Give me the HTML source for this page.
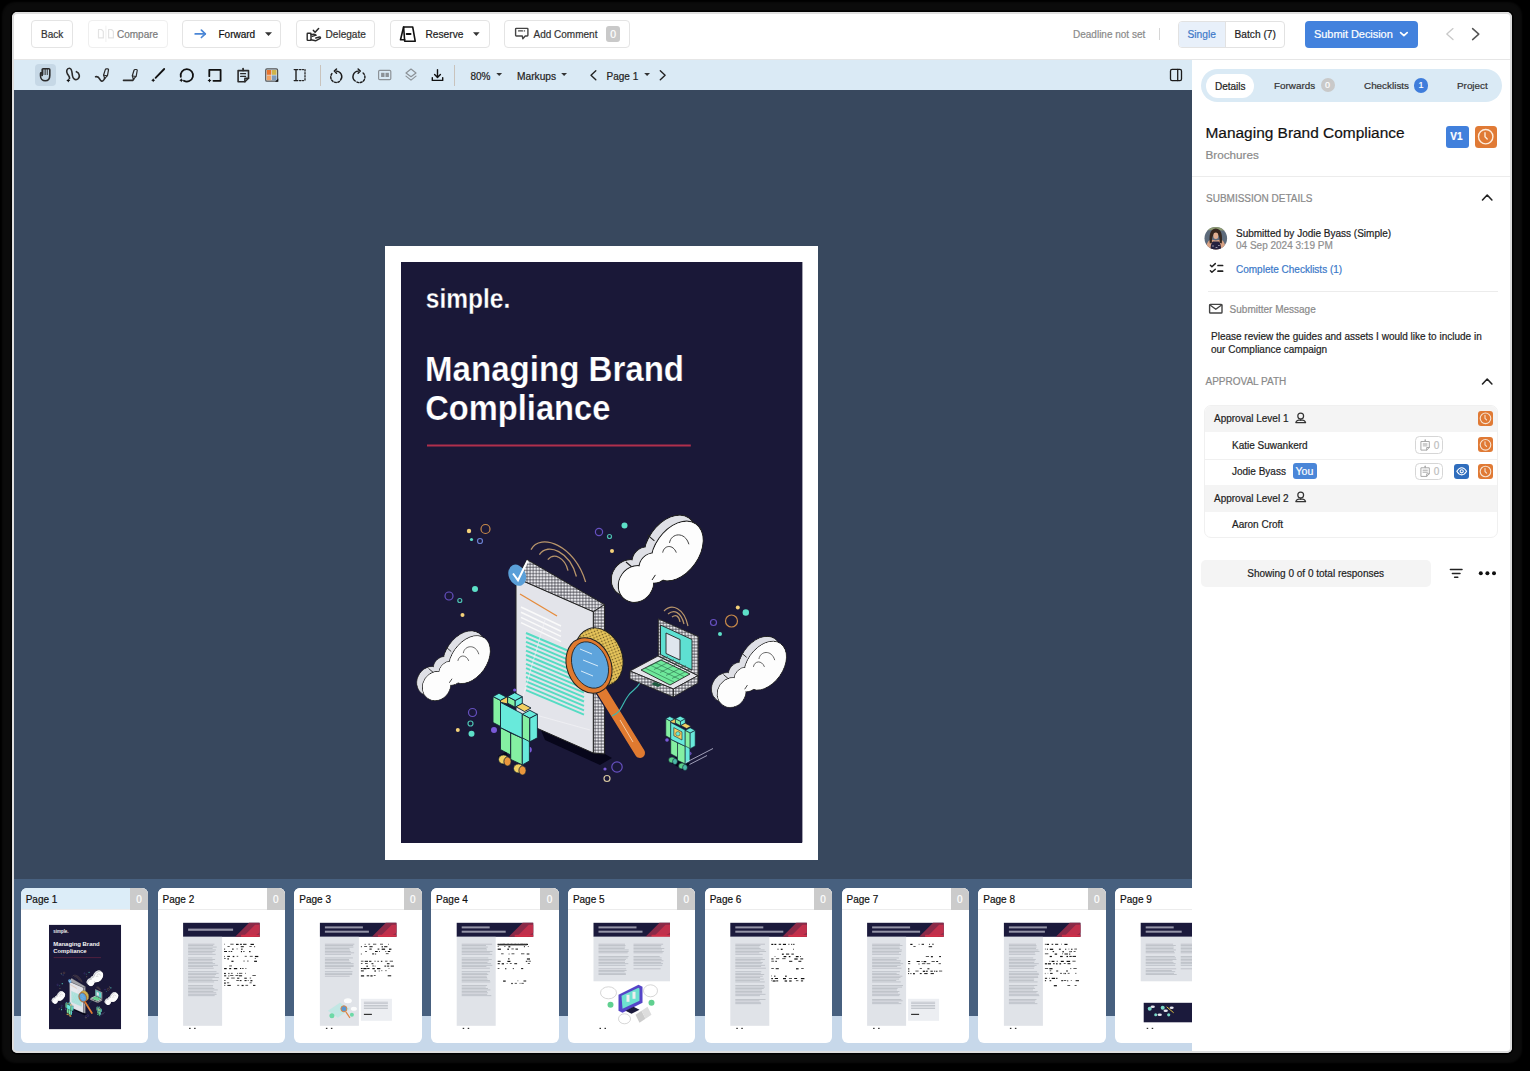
<!DOCTYPE html>
<html><head><meta charset="utf-8">
<style>
*{box-sizing:border-box}
html,body{margin:0;padding:0}
body{width:1530px;height:1071px;background:#000;position:relative;overflow:hidden;font-family:"Liberation Sans",sans-serif;color:#222}
.a{position:absolute}
#win{position:absolute;left:12px;top:12px;width:1500px;height:1041px;background:#fff;border-radius:5px;overflow:hidden;}
#winb{position:absolute;left:12px;top:12px;width:1500px;height:1041px;border-radius:5px;border:2px solid #dedede;pointer-events:none;box-shadow:0 0 0 1.5px #000,0 0 2px 10px #0b0b0b}
.btn{position:absolute;top:20px;height:27.5px;border:1px solid #e4e4e4;border-radius:4px;background:#fff}
.pat{background:#daeaf5}
.t{position:absolute;white-space:nowrap;line-height:1;-webkit-text-stroke:0.2px currentColor}
svg{position:absolute;overflow:visible}
</style></head>
<body>
<div id="win"></div>

<!-- HEADER -->
<div class="a" style="left:12px;top:59px;width:1500px;height:1px;background:#e6e6e6"></div>
<div class="btn" style="left:31px;width:42px"></div>
<div class="t" style="left:41px;top:30px;font-size:10px;color:#333">Back</div>

<div class="btn" style="left:88px;width:80px;border-color:#efefef"></div>
<div class="t" style="left:117px;top:30px;font-size:10px;color:#7a7a7a">Compare</div>

<div class="btn" style="left:182px;width:99px"></div>
<div class="t" style="left:218.5px;top:30px;font-size:10px;color:#111">Forward</div>

<div class="btn" style="left:296px;width:79px"></div>
<div class="t" style="left:325.5px;top:30px;font-size:10.1px;color:#333">Delegate</div>

<div class="btn" style="left:389.5px;width:100px"></div>
<div class="t" style="left:425.5px;top:30px;font-size:10.2px;color:#222">Reserve</div>

<div class="btn" style="left:504px;width:126px"></div>
<div class="t" style="left:533.5px;top:30px;font-size:10px;color:#333">Add Comment</div>
<div class="a" style="left:605.5px;top:26px;width:14.5px;height:16px;background:#c9c9c9;border-radius:3px"></div>
<div class="t" style="left:610.2px;top:29px;font-size:10.5px;color:#fff">0</div>

<div class="t" style="left:1073px;top:30px;font-size:10px;color:#8a8a8a">Deadline not set</div>
<div class="a" style="left:1159px;top:28px;width:1px;height:12px;background:#d6d6d6"></div>

<div class="a" style="left:1178px;top:20.5px;width:107px;height:27px;border:1px solid #e2e2e2;border-radius:4px;background:#fff;overflow:hidden">
  <div class="a" style="left:0;top:0;width:47px;height:25px;background:#e8f0fa;border-right:1px solid #e2e2e2"></div>
</div>
<div class="t" style="left:1187.5px;top:30px;font-size:10.2px;color:#3d78c8">Single</div>
<div class="t" style="left:1234.5px;top:30px;font-size:10.2px;color:#222">Batch (7)</div>

<div class="a" style="left:1304.5px;top:20.5px;width:113px;height:27px;background:#4382dd;border-radius:4px"></div>
<div class="t" style="left:1314px;top:28.6px;font-size:11px;color:#fff;letter-spacing:-0.05px">Submit Decision</div>

<!-- TOOLBAR -->
<div class="a pat" style="left:12px;top:60px;width:1180px;height:30px"></div>
<div class="a" style="left:35px;top:64px;width:21px;height:22px;background:#c6d8e6;border-radius:4px"></div>
<div class="a" style="left:320px;top:64.5px;width:1px;height:21px;background:#c9c3bc"></div>
<div class="a" style="left:453.5px;top:64.5px;width:1px;height:21px;background:#c9c3bc"></div>
<div class="t" style="left:470.5px;top:71.5px;font-size:10px;color:#222">80%</div>
<div class="t" style="left:517px;top:71.5px;font-size:10.2px;color:#222">Markups</div>
<div class="t" style="left:606.5px;top:71.5px;font-size:10px;color:#222">Page 1</div>

<!-- VIEWER -->
<div class="a" style="left:12px;top:90px;width:1180px;height:788.5px;background:#38485e"></div>
<div class="a" style="left:385px;top:246px;width:433px;height:613.5px;background:#fff"></div>
<div class="a" style="left:401.4px;top:262px;width:401px;height:580.5px;background:#1a1838"></div>

<!--COVER-START-->
<svg width="1530" height="1071" style="left:0;top:0">
<defs><g id="cloud">
 <g transform="translate(-7 -6)" fill="#dfe0e6" stroke="#222" stroke-width="1.1">
  <ellipse cx="70" cy="40" rx="22" ry="33" transform="rotate(35 70 40)"/>
  <ellipse cx="29" cy="73" rx="17" ry="19" transform="rotate(35 29 73)"/>
  <circle cx="47" cy="57" r="15"/>
 </g>
 <g transform="translate(-7 -6)" fill="#dfe0e6">
  <ellipse cx="70" cy="40" rx="21.4" ry="32.4" transform="rotate(35 70 40)"/>
  <ellipse cx="29" cy="73" rx="16.4" ry="18.4" transform="rotate(35 29 73)"/>
  <circle cx="47" cy="57" r="14.4"/>
 </g>
 <path d="M47.4 29.9 L40.4 23.9 M26 57 L19 51" stroke="#222" stroke-width="1.1"/>
 <g fill="#fdfdfd" stroke="#222" stroke-width="1.1">
  <ellipse cx="70" cy="40" rx="22" ry="33" transform="rotate(35 70 40)"/>
  <ellipse cx="29" cy="73" rx="17" ry="19" transform="rotate(35 29 73)"/>
  <circle cx="47" cy="57" r="15"/>
 </g>
 <g fill="#fdfdfd">
  <ellipse cx="70" cy="40" rx="21.4" ry="32.4" transform="rotate(35 70 40)"/>
  <ellipse cx="29" cy="73" rx="16.4" ry="18.4" transform="rotate(35 29 73)"/>
  <circle cx="47" cy="57" r="14.4"/>
 </g>
 <path d="M48.4 63.9 L45 69" stroke="#222" stroke-width="1"/>
 <path d="M62.5 31.9 C64 22 78 20 81.9 33.3" stroke="#444" stroke-width="1" fill="none"/>
 <path d="M55.7 41.6 C57 34 66 33 69.3 41.6" stroke="#444" stroke-width="1" fill="none"/>
</g></defs>
<defs><g id="coverart">
<rect x="0" y="0" width="401" height="580.5" fill="#1a1838"/>
<text x="24.4" y="46.2" font-family="Liberation Sans" font-weight="700" font-size="28.5" fill="#fff" transform="translate(24.4 0) scale(0.86 1) translate(-24.4 0)" stroke="#1a1838" stroke-width="0.3">simple.</text>
<text x="23.7" y="118.8" font-family="Liberation Sans" font-weight="700" font-size="34.2" fill="#fff" transform="translate(23.7 0) scale(0.967 1) translate(-23.7 0)" stroke="#1a1838" stroke-width="0.25">Managing Brand</text>
<text x="23.9" y="158" font-family="Liberation Sans" font-weight="700" font-size="34.2" fill="#fff" transform="translate(23.9 0) scale(0.955 1) translate(-23.9 0)" stroke="#1a1838" stroke-width="0.25">Compliance</text>
<rect x="25.6" y="182.5" width="263.8" height="2" fill="#b02f4c"/>
<g transform="translate(-401.4 -262)">
<defs>
 <pattern id="dotp" width="3.1" height="3.1" patternUnits="userSpaceOnUse"><rect width="3.1" height="3.1" fill="#6c6c74"/><circle cx="1.55" cy="1.55" r="1.25" fill="#ececf0"/></pattern>
 <pattern id="dotm" width="3" height="3" patternUnits="userSpaceOnUse"><rect width="3" height="3" fill="#e6c45a"/><circle cx="1.5" cy="1.5" r="0.8" fill="#6a5520"/></pattern>
 <clipPath id="facec"><path d="M516 578 L593.3 611.8 L593.3 753 L516 719 Z"/></clipPath>
</defs>
<circle cx="469" cy="531" r="2.2" fill="#f5d27a"/><circle cx="485.5" cy="529" r="4.5" fill="none" stroke="#c88a4a" stroke-width="1.2"/><circle cx="471.5" cy="539.5" r="1.6" fill="#5de0c8"/><circle cx="480" cy="541" r="2.5" fill="none" stroke="#6a7fd0" stroke-width="1.2"/><circle cx="599" cy="532" r="3.6" fill="none" stroke="#6650c0" stroke-width="1.2"/><circle cx="609.5" cy="536.5" r="2" fill="none" stroke="#4cc0b0" stroke-width="1.2"/><circle cx="624.5" cy="525.5" r="3" fill="#5de0c8"/><circle cx="612" cy="551" r="2" fill="#f5d27a"/><circle cx="475" cy="589" r="3" fill="#5de0c8"/><circle cx="449" cy="596" r="4" fill="none" stroke="#6650c0" stroke-width="1.2"/><circle cx="459.8" cy="600.5" r="2" fill="none" stroke="#4cc0b0" stroke-width="1.2"/><circle cx="462.5" cy="615" r="2" fill="#f5d27a"/><circle cx="737.8" cy="607.5" r="2" fill="#f5d27a"/><circle cx="745.8" cy="612.5" r="3.2" fill="#5de0c8"/><circle cx="731.5" cy="621" r="6" fill="none" stroke="#c88a4a" stroke-width="1.2"/><circle cx="713.5" cy="622.5" r="3" fill="none" stroke="#6650c0" stroke-width="1.2"/><circle cx="720" cy="634" r="2" fill="#5de0c8"/><circle cx="472.5" cy="712.5" r="4" fill="none" stroke="#6650c0" stroke-width="1.2"/><circle cx="470.5" cy="723.5" r="2.5" fill="none" stroke="#4cc0b0" stroke-width="1.2"/><circle cx="457.8" cy="730" r="2" fill="#f5d27a"/><circle cx="471.5" cy="733.8" r="3" fill="#5de0c8"/><circle cx="494" cy="730" r="3" fill="#7a5ad8"/><circle cx="528.8" cy="749.8" r="3" fill="#7a5ad8"/><circle cx="605" cy="769" r="1.6" fill="#7a5ad8"/><circle cx="617" cy="767" r="5.2" fill="none" stroke="#6650c0" stroke-width="1.2"/><circle cx="607" cy="778.5" r="3" fill="none" stroke="#d8c8a0" stroke-width="1.2"/><circle cx="667" cy="740" r="1.8" fill="#7a5ad8"/><circle cx="689.5" cy="753.5" r="2" fill="#7a5ad8"/>
<use href="#cloud" transform="translate(607 511)"/>
<use href="#cloud" transform="translate(413.3 627.6) scale(0.8)"/>
<use href="#cloud" transform="translate(708 633) scale(0.815)"/>
<!-- wifi arcs over doc -->
<g fill="none" stroke="#b8956a" stroke-width="1.3">
 <path d="M531 549.6 C540 532 575 545 585.6 582"/>
 <path d="M539.4 554.6 C548 542 570 552 576.4 576.5"/>
 <path d="M547.8 559.7 C554 552 565 558 568 570.6"/>
</g>
<!-- doc shadow -->
<path d="M540 728 L593 753 L605 754 L612 758 L600 765 L545 740 Z" fill="#07061a"/>
<!-- document -->
<path d="M527.3 559.7 L604.6 604.6 L593.3 611.8 L516 578 Z" fill="url(#dotp)" stroke="#222" stroke-width="1"/>
<path d="M593.3 611.8 L604.6 604.6 L604.6 754 L593.3 753 Z" fill="url(#dotp)" stroke="#222" stroke-width="1"/>
<path d="M516 578 L593.3 611.8 L593.3 753 L516 719 Z" fill="#e3e4ea" stroke="#222" stroke-width="1"/>
<g clip-path="url(#facec)"><path d="M521 607.0 L561 626.0" stroke="#fafafa" stroke-width="1.5"/><path d="M521 612.2 L561 631.2" stroke="#fafafa" stroke-width="1.5"/><path d="M521 617.4 L561 636.4" stroke="#fafafa" stroke-width="1.5"/><path d="M521 622.6 L561 641.6" stroke="#fafafa" stroke-width="1.5"/><path d="M520 594 L557 616" stroke="#e58a3a" stroke-width="1.3"/><path d="M526 633.0 L584 657.5" stroke="#55dcc4" stroke-width="1.9"/><path d="M526 637.4 L584 661.9" stroke="#55dcc4" stroke-width="1.9"/><path d="M526 641.8 L584 666.3" stroke="#55dcc4" stroke-width="1.9"/><path d="M526 646.2 L584 670.7" stroke="#55dcc4" stroke-width="1.9"/><path d="M526 650.6 L584 675.1" stroke="#55dcc4" stroke-width="1.9"/><path d="M526 655.0 L584 679.5" stroke="#55dcc4" stroke-width="1.9"/><path d="M526 659.4 L584 683.9" stroke="#55dcc4" stroke-width="1.9"/><path d="M526 663.8 L584 688.3" stroke="#55dcc4" stroke-width="1.9"/><path d="M526 668.2 L584 692.7" stroke="#55dcc4" stroke-width="1.9"/><path d="M526 672.6 L584 697.1" stroke="#55dcc4" stroke-width="1.9"/><path d="M526 677.0 L584 701.5" stroke="#55dcc4" stroke-width="1.9"/><path d="M526 681.4 L584 705.9" stroke="#55dcc4" stroke-width="1.9"/><path d="M526 685.8 L584 710.3" stroke="#55dcc4" stroke-width="1.9"/><path d="M526 690.2 L584 714.7" stroke="#55dcc4" stroke-width="1.9"/><path d="M522 700 L545 620 M525 712 L590 730" stroke="#f4f4f8" stroke-width="0.8" opacity="0.8"/></g>
<ellipse cx="517.2" cy="575.2" rx="8.4" ry="11" transform="rotate(-25 517.2 575.2)" fill="#5a9fd8"/>
<path d="M513 573.5 L518 580.3 L527.7 560.5" fill="none" stroke="#fff" stroke-width="2"/>
<!-- magnifier -->
<path d="M601 690 L640 753" stroke="#1a1838" stroke-width="12.5" stroke-linecap="round"/>
<path d="M601 690 L640 753" stroke="#e07a30" stroke-width="10" stroke-linecap="round"/>
<path d="M620 720 L633 742" stroke="#f5c8a0" stroke-width="1" />
<ellipse cx="599" cy="657" rx="23" ry="30" transform="rotate(-22 599 657)" fill="url(#dotm)" stroke="#222" stroke-width="1"/>
<ellipse cx="589" cy="665.5" rx="22" ry="28.5" transform="rotate(-22 589 665.5)" fill="#e07a30" stroke="#222" stroke-width="1"/>
<ellipse cx="590" cy="665" rx="17.5" ry="24" transform="rotate(-22 590 665)" fill="#5ea4dc" stroke="#222" stroke-width="0.8"/>
<g stroke="#d8ecfa" stroke-width="1"><path d="M580 649 L592 654"/><path d="M583 660 L598 666"/><path d="M581 671 L593 676"/></g>
<path d="M612 716 C622 712 622 704 628 696 C632 690 636 690 640 683" fill="none" stroke="#3cb8b0" stroke-width="1.2"/>
<!-- laptop -->
<g stroke="#222" stroke-width="0.9">
 <path d="M630 671 L658 656 L698 675.6 L673.4 689 Z" fill="#e4e4ea"/>
 <path d="M630 671 L673.4 689 L673.4 697 L630 679 Z" fill="url(#dotp)"/>
 <path d="M673.4 689 L698 675.6 L698 683 L673.4 697 Z" fill="url(#dotp)"/>
 <path d="M658.3 618.8 L698.2 636.6 L698.2 675.6 L658.3 656 Z" fill="url(#dotp)"/>
 <path d="M660.5 625 L692 639.5 L692 670 L660.5 654.5 Z" fill="#5ee0d2"/>
 <path d="M666 633 L680 639.5 L680 660 L666 653.5 Z" fill="#dfe6ee"/>
 <path d="M641 670 L661 660 L690 674 L670 685 Z" fill="#6ee89a"/>
</g>
<g stroke="#2a6a4a" stroke-width="0.6">
 <path d="M645 668 L674 682 M650 665 L679 679 M655 662.5 L684 676.5"/>
 <path d="M648 666.5 L668 656.5 M654 669.5 L674 659.5 M660 672.5 L680 662.5 M666 675.5 L686 665.5 M672 678.5 L690 669.5"/>
</g>
<path d="M651 684 L658 687 L662 685 L655 682 Z" fill="#1e5a40"/>
<g fill="none" stroke="#b8956a" stroke-width="1.2">
 <path d="M664 611 C672 603 684 608 688 626"/><path d="M668 614 C674 609 681 612 684 624"/><path d="M672 617 C676 614 679 616 680 622"/>
</g>
<!-- left robot -->
<g id="robot" stroke="#123" stroke-width="0.9" stroke-linejoin="round">
 <path d="M493 696.5 L500.5 700.4 L500.5 726.4 L493 722.5 Z" fill="#84f0a2"/>
 <path d="M493 696.5 L499 693.3 L506.5 697.2 L500.5 700.4 Z" fill="#68eadb"/>
 <path d="M500.5 700.4 L506.5 697.2 L507.6 697.8 L507.6 704 L500.5 702.3 Z" fill="#f2cf62"/>
 <path d="M507.6 696.5 L515.2 700.5 L515.2 707.2 L507.6 703.2 Z" fill="#84f0a2"/>
 <path d="M515.2 700.5 L522.3 696.7 L522.3 703.4 L515.2 707.2 Z" fill="#68eadb"/>
 <path d="M507.6 696.5 L514.7 692.7 L522.3 696.7 L515.2 700.5 Z" fill="#68eadb"/>
 <path d="M500.5 749.6 L510.7 755 L510.7 733 L500.5 727.6 Z" fill="#84f0a2"/>
 <path d="M510.7 733 L522.3 738.2 L522.3 764.9 L510.7 759.4 Z" fill="#84f0a2"/>
 <path d="M522.3 738.2 L529.4 734.5 L529.4 761 L522.3 764.9 Z" fill="#68eadb"/>
 <path d="M500.5 702.3 L522.3 713.8 L522.3 738.2 L500.5 727.6 Z" fill="#68eadb"/>
 <path d="M516 706.8 L522.3 703.4 L531 708 L524.5 711.5 Z" fill="#f2cf62"/>
 <path d="M522.3 714.3 L529.8 710.3 L537.4 714.3 L529.8 718.3 Z" fill="#68eadb"/>
 <path d="M522.3 714.3 L529.8 718.3 L529.8 741.8 L522.3 737.8 Z" fill="#84f0a2"/>
 <path d="M529.8 718.3 L537.4 714.3 L537.4 737.8 L529.8 741.8 Z" fill="#68eadb"/>
</g>
<g stroke="#123" stroke-width="0.8">
 <path d="M498 756 L506 752 L510 760 L502 765 Z" fill="#07061a" stroke="none"/>
 <ellipse cx="503.5" cy="759.5" rx="5" ry="4.6" fill="#f2cf62"/>
 <ellipse cx="507.5" cy="761.5" rx="3.6" ry="4.6" fill="#e9963c"/>
 <ellipse cx="518.5" cy="768.5" rx="5" ry="4.6" fill="#f2cf62"/>
 <ellipse cx="522.5" cy="770.5" rx="3.6" ry="4.6" fill="#e9963c"/>
</g>
<circle cx="514.7" cy="690" r="1.6" fill="#7a5ad8"/>
<!-- small robot -->
<path d="M668 761 L676 757 L690 764 L683 770 Z" fill="#07061a"/>
<use href="#robot" transform="translate(665.8 716) scale(0.662) translate(-493 -692.5)"/>
<g stroke="#123" stroke-width="0.6">
 <ellipse cx="672" cy="760" rx="3.5" ry="3" fill="#5ccf8a"/><ellipse cx="675" cy="761.5" rx="2.4" ry="3" fill="#4bb8a8"/>
 <ellipse cx="682" cy="766" rx="3.5" ry="3" fill="#5ccf8a"/><ellipse cx="685" cy="767.5" rx="2.4" ry="3" fill="#4bb8a8"/>
</g>
<path d="M673.8 727.6 L682 731.9 L682 740 L673.8 735.7 Z" fill="#f2cf62" stroke="#123" stroke-width="0.6"/>
<circle cx="677.9" cy="733.8" r="2.2" fill="#68eadb" stroke="#6a5520" stroke-width="0.6"/>
<path d="M685.7 762.6 L713 748.5 M689.5 764.5 L707 755.5" stroke="#d8d8ee" stroke-width="0.7"/>
</g>
</g></defs>
<use href="#coverart" transform="translate(401.4 262)"/>
</svg>
<!--COVER-END-->
<!-- STRIP -->
<div class="a" style="left:12px;top:878.5px;width:1180px;height:137.5px;background:#47607f"></div>
<div class="a" style="left:12px;top:1016px;width:1180px;height:37px;background:#c7d8ea"></div>

<!--THUMBS-START-->
<div class="a" style="left:20.8px;top:888.1px;width:127.4px;height:155.3px;background:#fff;border-radius:6px;overflow:hidden"><div class="a" style="left:0;top:0;width:127.4px;height:22.3px;background:#dcedf8;border-bottom:1px solid #ececec"></div><div class="a" style="left:109.2px;top:0;width:18.2px;height:21.6px;background:#cbcbcb"></div></div>
<div class="t" style="left:25.7px;top:894.9px;font-size:10px;color:#111">Page 1</div>
<div class="t" style="left:136.3px;top:894.9px;font-size:10px;color:#fff">0</div>
<div class="a" style="left:157.6px;top:888.1px;width:127.4px;height:155.3px;background:#fff;border-radius:6px;overflow:hidden"><div class="a" style="left:0;top:0;width:127.4px;height:22.3px;background:#fff;border-bottom:1px solid #ececec"></div><div class="a" style="left:109.2px;top:0;width:18.2px;height:21.6px;background:#cbcbcb"></div></div>
<div class="t" style="left:162.5px;top:894.9px;font-size:10px;color:#111">Page 2</div>
<div class="t" style="left:273.1px;top:894.9px;font-size:10px;color:#fff">0</div>
<div class="a" style="left:294.4px;top:888.1px;width:127.4px;height:155.3px;background:#fff;border-radius:6px;overflow:hidden"><div class="a" style="left:0;top:0;width:127.4px;height:22.3px;background:#fff;border-bottom:1px solid #ececec"></div><div class="a" style="left:109.2px;top:0;width:18.2px;height:21.6px;background:#cbcbcb"></div></div>
<div class="t" style="left:299.3px;top:894.9px;font-size:10px;color:#111">Page 3</div>
<div class="t" style="left:409.9px;top:894.9px;font-size:10px;color:#fff">0</div>
<div class="a" style="left:431.2px;top:888.1px;width:127.4px;height:155.3px;background:#fff;border-radius:6px;overflow:hidden"><div class="a" style="left:0;top:0;width:127.4px;height:22.3px;background:#fff;border-bottom:1px solid #ececec"></div><div class="a" style="left:109.2px;top:0;width:18.2px;height:21.6px;background:#cbcbcb"></div></div>
<div class="t" style="left:436.1px;top:894.9px;font-size:10px;color:#111">Page 4</div>
<div class="t" style="left:546.7px;top:894.9px;font-size:10px;color:#fff">0</div>
<div class="a" style="left:568.0px;top:888.1px;width:127.4px;height:155.3px;background:#fff;border-radius:6px;overflow:hidden"><div class="a" style="left:0;top:0;width:127.4px;height:22.3px;background:#fff;border-bottom:1px solid #ececec"></div><div class="a" style="left:109.2px;top:0;width:18.2px;height:21.6px;background:#cbcbcb"></div></div>
<div class="t" style="left:572.9px;top:894.9px;font-size:10px;color:#111">Page 5</div>
<div class="t" style="left:683.5px;top:894.9px;font-size:10px;color:#fff">0</div>
<div class="a" style="left:704.8px;top:888.1px;width:127.4px;height:155.3px;background:#fff;border-radius:6px;overflow:hidden"><div class="a" style="left:0;top:0;width:127.4px;height:22.3px;background:#fff;border-bottom:1px solid #ececec"></div><div class="a" style="left:109.2px;top:0;width:18.2px;height:21.6px;background:#cbcbcb"></div></div>
<div class="t" style="left:709.7px;top:894.9px;font-size:10px;color:#111">Page 6</div>
<div class="t" style="left:820.3px;top:894.9px;font-size:10px;color:#fff">0</div>
<div class="a" style="left:841.6px;top:888.1px;width:127.4px;height:155.3px;background:#fff;border-radius:6px;overflow:hidden"><div class="a" style="left:0;top:0;width:127.4px;height:22.3px;background:#fff;border-bottom:1px solid #ececec"></div><div class="a" style="left:109.2px;top:0;width:18.2px;height:21.6px;background:#cbcbcb"></div></div>
<div class="t" style="left:846.5px;top:894.9px;font-size:10px;color:#111">Page 7</div>
<div class="t" style="left:957.1px;top:894.9px;font-size:10px;color:#fff">0</div>
<div class="a" style="left:978.4px;top:888.1px;width:127.4px;height:155.3px;background:#fff;border-radius:6px;overflow:hidden"><div class="a" style="left:0;top:0;width:127.4px;height:22.3px;background:#fff;border-bottom:1px solid #ececec"></div><div class="a" style="left:109.2px;top:0;width:18.2px;height:21.6px;background:#cbcbcb"></div></div>
<div class="t" style="left:983.3px;top:894.9px;font-size:10px;color:#111">Page 8</div>
<div class="t" style="left:1093.9px;top:894.9px;font-size:10px;color:#fff">0</div>
<div class="a" style="left:1115.2px;top:888.1px;width:127.4px;height:155.3px;background:#fff;border-radius:6px;overflow:hidden"><div class="a" style="left:0;top:0;width:127.4px;height:22.3px;background:#fff;border-bottom:1px solid #ececec"></div><div class="a" style="left:109.2px;top:0;width:18.2px;height:21.6px;background:#cbcbcb"></div></div>
<div class="t" style="left:1120.1px;top:894.9px;font-size:10px;color:#111">Page 9</div>
<div class="t" style="left:1230.7px;top:894.9px;font-size:10px;color:#fff">0</div>
<svg width="1530" height="1071" style="left:0;top:0"><use href="#coverart" transform="translate(49.0 924.9) scale(0.1796)"/><g transform="translate(183.1 922.8)"><rect x="0" y="0" width="76.5" height="14" fill="#1b1a3c"/><path d="M52 14 L66 0 L76.5 0 L76.5 14 Z" fill="#8a2a48"/><path d="M60 14 L72 2 L76.5 2 L76.5 10 L70 14 Z" fill="#c0304c"/><rect x="58" y="12" width="18.5" height="2" fill="#d03048"/><rect x="5" y="5.8" width="45" height="2.2" fill="#e8e8f0" opacity="0.6"/><rect x="0" y="14" width="39" height="89" fill="#e0e3e8"/><rect x="5" y="21.0" width="26.3" height="0.7" fill="#b2b6be"/><rect x="5" y="22.4" width="25.1" height="0.7" fill="#b2b6be"/><rect x="5" y="23.9" width="28.6" height="0.7" fill="#b2b6be"/><rect x="5" y="25.3" width="24.5" height="0.7" fill="#b2b6be"/><rect x="5" y="26.8" width="27.8" height="0.7" fill="#b2b6be"/><rect x="5" y="28.2" width="26.6" height="0.7" fill="#b2b6be"/><rect x="5" y="29.7" width="24.4" height="0.7" fill="#b2b6be"/><rect x="5" y="31.1" width="27.6" height="0.7" fill="#b2b6be"/><rect x="5" y="34.8" width="24.3" height="0.7" fill="#b2b6be"/><rect x="5" y="36.2" width="27.0" height="0.7" fill="#b2b6be"/><rect x="5" y="37.7" width="24.5" height="0.7" fill="#b2b6be"/><rect x="5" y="39.2" width="24.6" height="0.7" fill="#b2b6be"/><rect x="5" y="40.6" width="27.0" height="0.7" fill="#b2b6be"/><rect x="5" y="42.1" width="29.8" height="0.7" fill="#b2b6be"/><rect x="5" y="43.5" width="24.9" height="0.7" fill="#b2b6be"/><rect x="5" y="45.0" width="25.6" height="0.7" fill="#b2b6be"/><rect x="5" y="48.6" width="28.4" height="0.7" fill="#b2b6be"/><rect x="5" y="50.1" width="30.6" height="0.7" fill="#b2b6be"/><rect x="5" y="51.5" width="28.0" height="0.7" fill="#b2b6be"/><rect x="5" y="53.0" width="26.8" height="0.7" fill="#b2b6be"/><rect x="5" y="54.4" width="30.8" height="0.7" fill="#b2b6be"/><rect x="5" y="55.9" width="24.3" height="0.7" fill="#b2b6be"/><rect x="5" y="57.3" width="30.0" height="0.7" fill="#b2b6be"/><rect x="5" y="58.8" width="26.0" height="0.7" fill="#b2b6be"/><rect x="5" y="62.4" width="25.0" height="0.7" fill="#b2b6be"/><rect x="5" y="63.9" width="24.8" height="0.7" fill="#b2b6be"/><rect x="5" y="65.3" width="26.2" height="0.7" fill="#b2b6be"/><rect x="5" y="66.8" width="29.7" height="0.7" fill="#b2b6be"/><rect x="5" y="68.2" width="25.3" height="0.7" fill="#b2b6be"/><rect x="5" y="69.7" width="28.1" height="0.7" fill="#b2b6be"/><rect x="5" y="71.1" width="28.5" height="0.7" fill="#b2b6be"/><rect x="5" y="72.6" width="26.6" height="0.7" fill="#b2b6be"/><rect x="41.0" y="21.0" width="0.7" height="0.7" fill="#111"/><rect x="47.2" y="21.0" width="3.3" height="0.7" fill="#111"/><rect x="52.9" y="21.0" width="2.6" height="1.2" fill="#111"/><rect x="56.8" y="21.0" width="2.0" height="1.0" fill="#111"/><rect x="60.0" y="21.0" width="3.4" height="1.0" fill="#111"/><rect x="67.4" y="21.0" width="3.4" height="1.2" fill="#111"/><rect x="44.4" y="23.4" width="2.2" height="0.7" fill="#111"/><rect x="57.7" y="23.4" width="3.0" height="1.0" fill="#111"/><rect x="66.3" y="23.4" width="2.3" height="0.7" fill="#111"/><rect x="71.1" y="23.4" width="0.9" height="1.0" fill="#111"/><rect x="41.0" y="25.8" width="1.0" height="1.0" fill="#111"/><rect x="48.9" y="25.8" width="1.7" height="1.0" fill="#111"/><rect x="53.5" y="25.8" width="1.0" height="0.7" fill="#111"/><rect x="58.1" y="25.8" width="1.3" height="1.2" fill="#111"/><rect x="41.0" y="28.2" width="2.9" height="1.0" fill="#111"/><rect x="45.4" y="28.2" width="1.9" height="0.7" fill="#111"/><rect x="48.0" y="28.2" width="1.1" height="1.0" fill="#111"/><rect x="57.8" y="28.2" width="1.1" height="1.2" fill="#111"/><rect x="60.0" y="28.2" width="1.5" height="0.7" fill="#111"/><rect x="66.0" y="28.2" width="1.4" height="1.2" fill="#111"/><rect x="41.0" y="33.1" width="0.6" height="1.2" fill="#111"/><rect x="44.2" y="33.1" width="2.6" height="1.0" fill="#111"/><rect x="49.6" y="33.1" width="1.6" height="1.2" fill="#111"/><rect x="53.6" y="33.1" width="1.5" height="0.7" fill="#111"/><rect x="61.6" y="33.1" width="2.1" height="0.7" fill="#111"/><rect x="66.7" y="33.1" width="2.9" height="0.7" fill="#111"/><rect x="71.8" y="33.1" width="3.4" height="1.2" fill="#111"/><rect x="41.0" y="35.5" width="1.6" height="0.7" fill="#111"/><rect x="44.3" y="35.5" width="1.5" height="1.2" fill="#111"/><rect x="71.7" y="35.5" width="1.0" height="0.7" fill="#111"/><rect x="48.3" y="37.9" width="2.1" height="1.2" fill="#111"/><rect x="60.3" y="37.9" width="1.3" height="0.7" fill="#111"/><rect x="64.0" y="37.9" width="1.5" height="0.7" fill="#111"/><rect x="71.0" y="37.9" width="2.9" height="1.2" fill="#111"/><rect x="46.1" y="42.8" width="2.8" height="0.7" fill="#111"/><rect x="41.0" y="45.2" width="2.6" height="1.2" fill="#111"/><rect x="46.1" y="45.2" width="2.0" height="1.2" fill="#111"/><rect x="50.8" y="45.2" width="3.3" height="1.2" fill="#111"/><rect x="56.9" y="45.2" width="1.1" height="1.0" fill="#111"/><rect x="58.8" y="45.2" width="1.8" height="0.7" fill="#111"/><rect x="62.2" y="45.2" width="1.1" height="0.7" fill="#111"/><rect x="41.0" y="50.1" width="1.7" height="1.2" fill="#111"/><rect x="45.3" y="50.1" width="1.0" height="1.2" fill="#111"/><rect x="47.8" y="50.1" width="1.8" height="0.7" fill="#111"/><rect x="54.0" y="50.1" width="0.6" height="1.2" fill="#111"/><rect x="55.8" y="50.1" width="3.4" height="0.7" fill="#111"/><rect x="62.1" y="50.1" width="0.8" height="0.7" fill="#111"/><rect x="41.0" y="52.5" width="2.1" height="1.0" fill="#111"/><rect x="45.4" y="52.5" width="0.8" height="1.2" fill="#111"/><rect x="47.1" y="52.5" width="3.2" height="0.7" fill="#111"/><rect x="52.4" y="52.5" width="2.9" height="0.7" fill="#111"/><rect x="55.9" y="52.5" width="3.1" height="1.0" fill="#111"/><rect x="69.3" y="52.5" width="3.4" height="0.7" fill="#111"/><rect x="43.6" y="54.9" width="2.0" height="1.0" fill="#111"/><rect x="48.1" y="54.9" width="3.5" height="0.7" fill="#111"/><rect x="54.0" y="54.9" width="2.2" height="1.0" fill="#111"/><rect x="61.2" y="54.9" width="2.5" height="1.0" fill="#111"/><rect x="66.6" y="54.9" width="1.4" height="0.7" fill="#111"/><rect x="41.0" y="57.3" width="1.5" height="0.7" fill="#111"/><rect x="53.2" y="57.3" width="2.6" height="0.7" fill="#111"/><rect x="56.6" y="57.3" width="1.8" height="1.0" fill="#111"/><rect x="61.4" y="57.3" width="2.1" height="1.0" fill="#111"/><rect x="64.6" y="57.3" width="1.0" height="0.7" fill="#111"/><rect x="67.3" y="57.3" width="2.0" height="1.2" fill="#111"/><rect x="41.0" y="59.7" width="1.7" height="1.2" fill="#111"/><rect x="43.8" y="59.7" width="2.3" height="0.7" fill="#111"/><rect x="66.5" y="59.7" width="2.1" height="0.7" fill="#111"/><rect x="41.0" y="62.1" width="1.2" height="0.7" fill="#111"/><rect x="44.3" y="62.1" width="3.4" height="1.0" fill="#111"/><rect x="54.1" y="62.1" width="2.0" height="0.7" fill="#111"/><rect x="58.5" y="62.1" width="2.0" height="1.2" fill="#111"/><rect x="62.3" y="62.1" width="2.7" height="0.7" fill="#111"/><rect x="69.9" y="62.1" width="2.4" height="1.0" fill="#111"/><rect x="6" y="105" width="1.5" height="1.2" fill="#333"/><rect x="11" y="105" width="1.5" height="1.2" fill="#333"/></g><g transform="translate(319.9 922.8)"><rect x="0" y="0" width="76.5" height="14" fill="#1b1a3c"/><path d="M52 14 L66 0 L76.5 0 L76.5 14 Z" fill="#8a2a48"/><path d="M60 14 L72 2 L76.5 2 L76.5 10 L70 14 Z" fill="#c0304c"/><rect x="58" y="12" width="18.5" height="2" fill="#d03048"/><rect x="5" y="3.6" width="38" height="2" fill="#e8e8f0" opacity="0.6"/><rect x="5" y="7.9" width="44" height="2" fill="#e8e8f0" opacity="0.6"/><rect x="0" y="14" width="39" height="89" fill="#e0e3e8"/><rect x="5" y="21.0" width="29.4" height="0.7" fill="#b2b6be"/><rect x="5" y="22.4" width="28.3" height="0.7" fill="#b2b6be"/><rect x="5" y="23.9" width="28.5" height="0.7" fill="#b2b6be"/><rect x="5" y="25.3" width="24.5" height="0.7" fill="#b2b6be"/><rect x="5" y="26.8" width="25.0" height="0.7" fill="#b2b6be"/><rect x="5" y="28.2" width="25.8" height="0.7" fill="#b2b6be"/><rect x="5" y="29.7" width="29.2" height="0.7" fill="#b2b6be"/><rect x="5" y="31.1" width="26.1" height="0.7" fill="#b2b6be"/><rect x="5" y="34.8" width="28.0" height="0.7" fill="#b2b6be"/><rect x="5" y="36.2" width="24.1" height="0.7" fill="#b2b6be"/><rect x="5" y="37.7" width="24.4" height="0.7" fill="#b2b6be"/><rect x="5" y="39.2" width="25.9" height="0.7" fill="#b2b6be"/><rect x="5" y="40.6" width="28.7" height="0.7" fill="#b2b6be"/><rect x="5" y="42.1" width="28.8" height="0.7" fill="#b2b6be"/><rect x="5" y="43.5" width="28.7" height="0.7" fill="#b2b6be"/><rect x="5" y="45.0" width="26.0" height="0.7" fill="#b2b6be"/><rect x="5" y="48.6" width="27.6" height="0.7" fill="#b2b6be"/><rect x="5" y="50.1" width="27.3" height="0.7" fill="#b2b6be"/><rect x="5" y="51.5" width="27.3" height="0.7" fill="#b2b6be"/><rect x="5" y="53.0" width="24.8" height="0.7" fill="#b2b6be"/><rect x="44.9" y="21.0" width="0.6" height="1.2" fill="#111"/><rect x="48.4" y="21.0" width="1.8" height="0.7" fill="#111"/><rect x="53.1" y="21.0" width="3.3" height="0.7" fill="#111"/><rect x="60.1" y="21.0" width="3.0" height="0.7" fill="#111"/><rect x="68.2" y="21.0" width="0.6" height="1.0" fill="#111"/><rect x="41.0" y="23.4" width="0.9" height="1.0" fill="#111"/><rect x="44.2" y="23.4" width="3.0" height="0.7" fill="#111"/><rect x="49.5" y="23.4" width="3.2" height="1.0" fill="#111"/><rect x="61.7" y="23.4" width="1.3" height="1.2" fill="#111"/><rect x="64.2" y="23.4" width="3.3" height="1.0" fill="#111"/><rect x="49.5" y="25.8" width="2.3" height="1.0" fill="#111"/><rect x="57.7" y="25.8" width="1.7" height="1.0" fill="#111"/><rect x="61.8" y="25.8" width="3.4" height="1.2" fill="#111"/><rect x="69.1" y="25.8" width="2.4" height="1.2" fill="#111"/><rect x="45.2" y="28.2" width="1.8" height="0.7" fill="#111"/><rect x="55.1" y="28.2" width="2.7" height="1.0" fill="#111"/><rect x="59.1" y="28.2" width="0.7" height="1.0" fill="#111"/><rect x="65.3" y="28.2" width="1.1" height="0.7" fill="#111"/><rect x="67.9" y="28.2" width="2.4" height="1.0" fill="#111"/><rect x="41.0" y="30.6" width="0.6" height="1.2" fill="#111"/><rect x="52.2" y="30.6" width="2.1" height="1.0" fill="#111"/><rect x="55.4" y="30.6" width="0.8" height="1.2" fill="#111"/><rect x="65.9" y="30.6" width="2.8" height="0.7" fill="#111"/><rect x="41.0" y="38.0" width="2.6" height="0.7" fill="#111"/><rect x="44.8" y="38.0" width="3.3" height="1.0" fill="#111"/><rect x="49.2" y="38.0" width="2.3" height="1.0" fill="#111"/><rect x="54.5" y="38.0" width="1.3" height="0.7" fill="#111"/><rect x="57.6" y="38.0" width="1.2" height="1.0" fill="#111"/><rect x="61.0" y="38.0" width="1.4" height="1.0" fill="#111"/><rect x="65.2" y="38.0" width="2.4" height="0.7" fill="#111"/><rect x="69.8" y="38.0" width="3.3" height="0.7" fill="#111"/><rect x="41.0" y="40.4" width="1.6" height="0.7" fill="#111"/><rect x="45.1" y="40.4" width="2.7" height="0.7" fill="#111"/><rect x="51.6" y="40.4" width="1.9" height="1.0" fill="#111"/><rect x="67.0" y="40.4" width="2.6" height="1.0" fill="#111"/><rect x="46.5" y="42.8" width="1.5" height="1.2" fill="#111"/><rect x="52.4" y="42.8" width="1.6" height="0.7" fill="#111"/><rect x="54.8" y="42.8" width="0.7" height="1.0" fill="#111"/><rect x="64.5" y="42.8" width="1.8" height="1.0" fill="#111"/><rect x="67.2" y="42.8" width="2.1" height="1.0" fill="#111"/><rect x="70.8" y="42.8" width="3.2" height="1.0" fill="#111"/><rect x="41.0" y="45.2" width="1.7" height="1.0" fill="#111"/><rect x="43.4" y="45.2" width="3.3" height="1.2" fill="#111"/><rect x="47.3" y="45.2" width="2.3" height="1.0" fill="#111"/><rect x="52.5" y="45.2" width="2.4" height="1.2" fill="#111"/><rect x="57.1" y="45.2" width="3.3" height="1.2" fill="#111"/><rect x="68.8" y="45.2" width="0.6" height="1.0" fill="#111"/><rect x="41.0" y="47.6" width="2.9" height="1.0" fill="#111"/><rect x="54.5" y="47.6" width="1.5" height="1.2" fill="#111"/><rect x="58.9" y="47.6" width="0.7" height="1.2" fill="#111"/><rect x="61.4" y="47.6" width="1.0" height="0.7" fill="#111"/><rect x="65.4" y="47.6" width="1.3" height="0.7" fill="#111"/><rect x="41.0" y="52.5" width="3.2" height="1.2" fill="#111"/><rect x="46.8" y="52.5" width="2.5" height="1.0" fill="#111"/><rect x="50.5" y="52.5" width="2.2" height="1.2" fill="#111"/><rect x="53.9" y="52.5" width="1.8" height="0.7" fill="#111"/><rect x="67.8" y="52.5" width="3.5" height="1.0" fill="#111"/><rect x="41" y="76" width="31" height="22" fill="#eceef2"/><rect x="44" y="79.0" width="24" height="0.7" fill="#b2b6be"/><rect x="44" y="80.6" width="24" height="0.7" fill="#b2b6be"/><rect x="44" y="82.2" width="24" height="0.7" fill="#b2b6be"/><rect x="44" y="83.8" width="24" height="0.7" fill="#b2b6be"/><rect x="44" y="85.4" width="24" height="0.7" fill="#b2b6be"/><rect x="44" y="91" width="8" height="1.2" fill="#333"/><g opacity="0.9"><path d="M8 88 L20 80 L30 86 L18 95 Z" fill="#bfe8e4"/><circle cx="24" cy="86" r="3" fill="#4a90d0" stroke="#e07a30" stroke-width="1"/><path d="M26 89 L30 95" stroke="#e07a30" stroke-width="1.2"/><circle cx="12" cy="93" r="2.5" fill="#60d8a0"/><circle cx="32" cy="92" r="2" fill="#60d8a0"/><ellipse cx="28" cy="78" rx="4" ry="2.5" fill="#fff"/><ellipse cx="34" cy="86" rx="3" ry="2" fill="#fff"/></g><rect x="6" y="105" width="1.5" height="1.2" fill="#333"/><rect x="11" y="105" width="1.5" height="1.2" fill="#333"/></g><g transform="translate(456.7 922.8)"><rect x="0" y="0" width="76.5" height="14" fill="#1b1a3c"/><path d="M52 14 L66 0 L76.5 0 L76.5 14 Z" fill="#8a2a48"/><path d="M60 14 L72 2 L76.5 2 L76.5 10 L70 14 Z" fill="#c0304c"/><rect x="58" y="12" width="18.5" height="2" fill="#d03048"/><rect x="5" y="3.6" width="28" height="2" fill="#e8e8f0" opacity="0.6"/><rect x="5" y="7.9" width="44" height="2" fill="#e8e8f0" opacity="0.6"/><rect x="0" y="14" width="39" height="89" fill="#e0e3e8"/><rect x="5" y="21.0" width="30.4" height="0.7" fill="#b2b6be"/><rect x="5" y="22.4" width="24.3" height="0.7" fill="#b2b6be"/><rect x="5" y="23.9" width="26.1" height="0.7" fill="#b2b6be"/><rect x="5" y="25.3" width="24.8" height="0.7" fill="#b2b6be"/><rect x="5" y="26.8" width="25.3" height="0.7" fill="#b2b6be"/><rect x="5" y="28.2" width="30.8" height="0.7" fill="#b2b6be"/><rect x="5" y="29.7" width="28.1" height="0.7" fill="#b2b6be"/><rect x="5" y="31.1" width="30.5" height="0.7" fill="#b2b6be"/><rect x="5" y="34.8" width="26.6" height="0.7" fill="#b2b6be"/><rect x="5" y="36.2" width="30.1" height="0.7" fill="#b2b6be"/><rect x="5" y="37.7" width="27.1" height="0.7" fill="#b2b6be"/><rect x="5" y="39.2" width="25.8" height="0.7" fill="#b2b6be"/><rect x="5" y="40.6" width="29.4" height="0.7" fill="#b2b6be"/><rect x="5" y="42.1" width="30.6" height="0.7" fill="#b2b6be"/><rect x="5" y="43.5" width="24.7" height="0.7" fill="#b2b6be"/><rect x="5" y="45.0" width="28.2" height="0.7" fill="#b2b6be"/><rect x="5" y="48.6" width="28.3" height="0.7" fill="#b2b6be"/><rect x="5" y="50.1" width="25.5" height="0.7" fill="#b2b6be"/><rect x="5" y="51.5" width="26.6" height="0.7" fill="#b2b6be"/><rect x="5" y="53.0" width="25.0" height="0.7" fill="#b2b6be"/><rect x="5" y="54.4" width="25.4" height="0.7" fill="#b2b6be"/><rect x="5" y="55.9" width="25.8" height="0.7" fill="#b2b6be"/><rect x="5" y="57.3" width="28.2" height="0.7" fill="#b2b6be"/><rect x="5" y="58.8" width="28.6" height="0.7" fill="#b2b6be"/><rect x="5" y="62.4" width="25.4" height="0.7" fill="#b2b6be"/><rect x="5" y="63.9" width="24.1" height="0.7" fill="#b2b6be"/><rect x="5" y="65.3" width="26.3" height="0.7" fill="#b2b6be"/><rect x="5" y="66.8" width="28.7" height="0.7" fill="#b2b6be"/><rect x="5" y="68.2" width="25.3" height="0.7" fill="#b2b6be"/><rect x="5" y="69.7" width="26.2" height="0.7" fill="#b2b6be"/><rect x="5" y="71.1" width="25.4" height="0.7" fill="#b2b6be"/><rect x="5" y="72.6" width="29.6" height="0.7" fill="#b2b6be"/><rect x="41.0" y="21.0" width="0.7" height="1.0" fill="#111"/><rect x="43.8" y="21.0" width="1.0" height="1.2" fill="#111"/><rect x="45.7" y="21.0" width="2.6" height="1.0" fill="#111"/><rect x="50.5" y="21.0" width="1.8" height="1.2" fill="#111"/><rect x="54.1" y="21.0" width="1.6" height="1.0" fill="#111"/><rect x="57.8" y="21.0" width="1.7" height="0.7" fill="#111"/><rect x="61.1" y="21.0" width="1.0" height="0.7" fill="#111"/><rect x="63.6" y="21.0" width="3.1" height="0.7" fill="#111"/><rect x="67.5" y="21.0" width="0.7" height="1.0" fill="#111"/><rect x="68.9" y="21.0" width="2.4" height="1.2" fill="#111"/><rect x="41.0" y="23.4" width="1.0" height="0.7" fill="#111"/><rect x="47.6" y="23.4" width="1.1" height="0.7" fill="#111"/><rect x="51.7" y="23.4" width="1.9" height="1.2" fill="#111"/><rect x="67.2" y="23.4" width="1.0" height="1.0" fill="#111"/><rect x="71.1" y="23.4" width="1.0" height="0.7" fill="#111"/><rect x="41.0" y="25.8" width="3.2" height="1.2" fill="#111"/><rect x="50.6" y="25.8" width="1.7" height="1.2" fill="#111"/><rect x="54.7" y="25.8" width="2.4" height="0.7" fill="#111"/><rect x="58.8" y="25.8" width="2.5" height="1.0" fill="#111"/><rect x="44.4" y="30.7" width="2.5" height="0.7" fill="#111"/><rect x="52.0" y="30.7" width="0.7" height="1.0" fill="#111"/><rect x="54.8" y="30.7" width="2.9" height="0.7" fill="#111"/><rect x="64.3" y="30.7" width="3.4" height="0.7" fill="#111"/><rect x="70.0" y="30.7" width="2.7" height="1.0" fill="#111"/><rect x="51.3" y="35.6" width="1.6" height="1.0" fill="#111"/><rect x="70.2" y="35.6" width="3.1" height="1.2" fill="#111"/><rect x="41.0" y="38.0" width="2.9" height="1.0" fill="#111"/><rect x="50.7" y="38.0" width="3.0" height="1.2" fill="#111"/><rect x="69.1" y="38.0" width="1.6" height="1.0" fill="#111"/><rect x="71.7" y="38.0" width="2.5" height="0.7" fill="#111"/><rect x="41.0" y="40.4" width="2.1" height="1.0" fill="#111"/><rect x="45.0" y="40.4" width="2.3" height="1.2" fill="#111"/><rect x="49.9" y="40.4" width="1.0" height="0.7" fill="#111"/><rect x="53.1" y="40.4" width="1.9" height="0.7" fill="#111"/><rect x="57.6" y="40.4" width="2.8" height="1.0" fill="#111"/><rect x="71.1" y="40.4" width="2.1" height="0.7" fill="#111"/><rect x="41.0" y="45.3" width="1.7" height="0.7" fill="#111"/><rect x="48.5" y="45.3" width="1.1" height="1.2" fill="#111"/><rect x="56.1" y="45.3" width="1.0" height="1.0" fill="#111"/><rect x="64.4" y="45.3" width="2.1" height="1.0" fill="#111"/><rect x="46.4" y="57.7" width="2.6" height="1.2" fill="#111"/><rect x="60.8" y="57.7" width="0.8" height="0.7" fill="#111"/><rect x="66.8" y="57.7" width="2.7" height="1.0" fill="#111"/><rect x="54.6" y="60.1" width="1.4" height="1.2" fill="#111"/><rect x="58.0" y="60.1" width="2.2" height="0.7" fill="#111"/><rect x="62.9" y="60.1" width="0.9" height="0.7" fill="#111"/><rect x="64.7" y="60.1" width="2.4" height="0.7" fill="#111"/><rect x="41" y="21" width="29" height="1.6" fill="#333"/><rect x="6" y="105" width="1.5" height="1.2" fill="#333"/><rect x="11" y="105" width="1.5" height="1.2" fill="#333"/></g><g transform="translate(593.5 922.8)"><rect x="0" y="0" width="76.5" height="14" fill="#1b1a3c"/><path d="M52 14 L66 0 L76.5 0 L76.5 14 Z" fill="#8a2a48"/><path d="M60 14 L72 2 L76.5 2 L76.5 10 L70 14 Z" fill="#c0304c"/><rect x="58" y="12" width="18.5" height="2" fill="#d03048"/><rect x="5" y="3.6" width="38" height="2" fill="#e8e8f0" opacity="0.6"/><rect x="5" y="7.9" width="44" height="2" fill="#e8e8f0" opacity="0.6"/><rect x="0" y="14" width="76.5" height="44.5" fill="#e0e3e8"/><rect x="5" y="21.0" width="26.5" height="0.7" fill="#b2b6be"/><rect x="5" y="22.4" width="27.0" height="0.7" fill="#b2b6be"/><rect x="5" y="23.9" width="26.6" height="0.7" fill="#b2b6be"/><rect x="5" y="25.3" width="26.2" height="0.7" fill="#b2b6be"/><rect x="5" y="26.8" width="30.2" height="0.7" fill="#b2b6be"/><rect x="5" y="28.2" width="30.1" height="0.7" fill="#b2b6be"/><rect x="5" y="29.7" width="29.2" height="0.7" fill="#b2b6be"/><rect x="5" y="33.3" width="30.1" height="0.7" fill="#b2b6be"/><rect x="5" y="34.8" width="29.2" height="0.7" fill="#b2b6be"/><rect x="5" y="36.2" width="27.4" height="0.7" fill="#b2b6be"/><rect x="5" y="37.7" width="26.5" height="0.7" fill="#b2b6be"/><rect x="5" y="39.2" width="26.5" height="0.7" fill="#b2b6be"/><rect x="5" y="40.6" width="29.8" height="0.7" fill="#b2b6be"/><rect x="5" y="42.1" width="27.0" height="0.7" fill="#b2b6be"/><rect x="5" y="45.7" width="27.6" height="0.7" fill="#b2b6be"/><rect x="5" y="47.2" width="28.1" height="0.7" fill="#b2b6be"/><rect x="5" y="48.6" width="26.1" height="0.7" fill="#b2b6be"/><rect x="5" y="50.1" width="27.3" height="0.7" fill="#b2b6be"/><rect x="5" y="51.5" width="27.4" height="0.7" fill="#b2b6be"/><rect x="40" y="21.0" width="29.6" height="0.7" fill="#b2b6be"/><rect x="40" y="22.4" width="27.8" height="0.7" fill="#b2b6be"/><rect x="40" y="23.9" width="27.6" height="0.7" fill="#b2b6be"/><rect x="40" y="25.3" width="30.8" height="0.7" fill="#b2b6be"/><rect x="40" y="26.8" width="28.5" height="0.7" fill="#b2b6be"/><rect x="40" y="28.2" width="30.3" height="0.7" fill="#b2b6be"/><rect x="40" y="29.7" width="29.1" height="0.7" fill="#b2b6be"/><rect x="40" y="33.3" width="26.2" height="0.7" fill="#b2b6be"/><rect x="40" y="34.8" width="28.1" height="0.7" fill="#b2b6be"/><rect x="40" y="36.2" width="28.2" height="0.7" fill="#b2b6be"/><rect x="40" y="37.7" width="29.9" height="0.7" fill="#b2b6be"/><rect x="40" y="39.2" width="27.7" height="0.7" fill="#b2b6be"/><rect x="40" y="40.6" width="29.5" height="0.7" fill="#b2b6be"/><rect x="40" y="42.1" width="28.7" height="0.7" fill="#b2b6be"/><rect x="40" y="45.7" width="27.1" height="0.7" fill="#b2b6be"/><path d="M25 72 L45 62 L49 64 L49 80 L29 90 L25 88 Z" fill="#5544c8"/><path d="M28 73 L45 65 L46 66 L46 78 L29 86 Z" fill="#6ee0d0"/><rect x="33" y="72" width="3" height="7" fill="#eee"/><rect x="39" y="69" width="3" height="7" fill="#eee"/><path d="M32 88 L40 84 L46 87 L38 91 Z" fill="#1b1a3c"/><ellipse cx="15" cy="70" rx="8" ry="6" fill="#fff" stroke="#bbb" stroke-width="0.6"/><ellipse cx="57" cy="68" rx="7" ry="6" fill="#fff" stroke="#bbb" stroke-width="0.6"/><ellipse cx="31" cy="96" rx="6" ry="5" fill="#fff" stroke="#bbb" stroke-width="0.6"/><circle cx="17" cy="82" r="3" fill="#60d090"/><circle cx="58" cy="80" r="3" fill="#60d090"/><path d="M42 92 L48 88 L52 96 L46 100 Z" fill="#ccc"/><path d="M48 88 L54 84 L58 92 L52 96 Z" fill="#ddd"/><rect x="6" y="105" width="1.5" height="1.2" fill="#333"/><rect x="11" y="105" width="1.5" height="1.2" fill="#333"/></g><g transform="translate(730.3 922.8)"><rect x="0" y="0" width="76.5" height="14" fill="#1b1a3c"/><path d="M52 14 L66 0 L76.5 0 L76.5 14 Z" fill="#8a2a48"/><path d="M60 14 L72 2 L76.5 2 L76.5 10 L70 14 Z" fill="#c0304c"/><rect x="58" y="12" width="18.5" height="2" fill="#d03048"/><rect x="5" y="3.6" width="28" height="2" fill="#e8e8f0" opacity="0.6"/><rect x="5" y="7.9" width="48" height="2" fill="#e8e8f0" opacity="0.6"/><rect x="0" y="14" width="39" height="89" fill="#e0e3e8"/><rect x="5" y="21.0" width="29.7" height="0.7" fill="#b2b6be"/><rect x="5" y="22.4" width="25.2" height="0.7" fill="#b2b6be"/><rect x="5" y="23.9" width="24.0" height="0.7" fill="#b2b6be"/><rect x="5" y="25.3" width="25.4" height="0.7" fill="#b2b6be"/><rect x="5" y="26.8" width="29.3" height="0.7" fill="#b2b6be"/><rect x="5" y="28.2" width="30.8" height="0.7" fill="#b2b6be"/><rect x="5" y="29.7" width="24.0" height="0.7" fill="#b2b6be"/><rect x="5" y="31.1" width="27.4" height="0.7" fill="#b2b6be"/><rect x="5" y="34.8" width="27.4" height="0.7" fill="#b2b6be"/><rect x="5" y="36.2" width="29.6" height="0.7" fill="#b2b6be"/><rect x="5" y="37.7" width="25.3" height="0.7" fill="#b2b6be"/><rect x="5" y="39.2" width="27.5" height="0.7" fill="#b2b6be"/><rect x="5" y="40.6" width="26.4" height="0.7" fill="#b2b6be"/><rect x="5" y="42.1" width="29.8" height="0.7" fill="#b2b6be"/><rect x="5" y="43.5" width="25.8" height="0.7" fill="#b2b6be"/><rect x="5" y="45.0" width="30.6" height="0.7" fill="#b2b6be"/><rect x="5" y="48.6" width="26.0" height="0.7" fill="#b2b6be"/><rect x="5" y="50.1" width="25.5" height="0.7" fill="#b2b6be"/><rect x="5" y="51.5" width="28.9" height="0.7" fill="#b2b6be"/><rect x="5" y="53.0" width="27.5" height="0.7" fill="#b2b6be"/><rect x="5" y="54.4" width="24.8" height="0.7" fill="#b2b6be"/><rect x="5" y="55.9" width="28.5" height="0.7" fill="#b2b6be"/><rect x="5" y="57.3" width="24.6" height="0.7" fill="#b2b6be"/><rect x="5" y="58.8" width="29.5" height="0.7" fill="#b2b6be"/><rect x="5" y="62.4" width="28.9" height="0.7" fill="#b2b6be"/><rect x="5" y="63.9" width="29.5" height="0.7" fill="#b2b6be"/><rect x="5" y="65.3" width="28.4" height="0.7" fill="#b2b6be"/><rect x="5" y="66.8" width="26.5" height="0.7" fill="#b2b6be"/><rect x="5" y="68.2" width="26.8" height="0.7" fill="#b2b6be"/><rect x="5" y="69.7" width="26.8" height="0.7" fill="#b2b6be"/><rect x="5" y="71.1" width="30.2" height="0.7" fill="#b2b6be"/><rect x="5" y="72.6" width="24.6" height="0.7" fill="#b2b6be"/><rect x="5" y="76.2" width="30.2" height="0.7" fill="#b2b6be"/><rect x="5" y="77.7" width="24.2" height="0.7" fill="#b2b6be"/><rect x="5" y="79.1" width="25.4" height="0.7" fill="#b2b6be"/><rect x="5" y="80.6" width="25.8" height="0.7" fill="#b2b6be"/><rect x="41.0" y="21.0" width="2.0" height="1.2" fill="#111"/><rect x="44.1" y="21.0" width="1.9" height="1.2" fill="#111"/><rect x="48.4" y="21.0" width="2.4" height="1.0" fill="#111"/><rect x="52.6" y="21.0" width="3.1" height="1.2" fill="#111"/><rect x="58.1" y="21.0" width="1.0" height="1.0" fill="#111"/><rect x="61.0" y="21.0" width="0.9" height="1.2" fill="#111"/><rect x="63.0" y="21.0" width="1.1" height="1.2" fill="#111"/><rect x="47.2" y="25.9" width="1.0" height="1.0" fill="#111"/><rect x="50.5" y="25.9" width="1.8" height="1.2" fill="#111"/><rect x="62.7" y="25.9" width="0.6" height="1.2" fill="#111"/><rect x="51.6" y="30.8" width="1.9" height="1.2" fill="#111"/><rect x="55.7" y="30.8" width="3.2" height="1.0" fill="#111"/><rect x="61.1" y="30.8" width="2.4" height="1.0" fill="#111"/><rect x="44.3" y="33.2" width="0.8" height="0.7" fill="#111"/><rect x="53.3" y="33.2" width="2.7" height="1.2" fill="#111"/><rect x="58.5" y="33.2" width="1.6" height="1.2" fill="#111"/><rect x="65.5" y="33.2" width="2.8" height="1.2" fill="#111"/><rect x="69.7" y="33.2" width="0.7" height="1.0" fill="#111"/><rect x="41.0" y="35.6" width="2.2" height="1.0" fill="#111"/><rect x="45.6" y="35.6" width="3.3" height="0.7" fill="#111"/><rect x="51.9" y="35.6" width="3.4" height="0.7" fill="#111"/><rect x="64.0" y="35.6" width="3.4" height="1.2" fill="#111"/><rect x="70.0" y="35.6" width="2.9" height="1.0" fill="#111"/><rect x="41.0" y="38.0" width="2.8" height="0.7" fill="#111"/><rect x="45.0" y="38.0" width="1.6" height="1.0" fill="#111"/><rect x="58.8" y="38.0" width="3.2" height="1.0" fill="#111"/><rect x="68.1" y="38.0" width="2.9" height="1.0" fill="#111"/><rect x="41.0" y="45.4" width="2.5" height="0.7" fill="#111"/><rect x="45.4" y="45.4" width="3.1" height="1.0" fill="#111"/><rect x="65.7" y="45.4" width="2.6" height="1.2" fill="#111"/><rect x="70.9" y="45.4" width="2.5" height="0.7" fill="#111"/><rect x="41.0" y="52.8" width="0.7" height="0.7" fill="#111"/><rect x="43.9" y="52.8" width="1.2" height="1.2" fill="#111"/><rect x="54.8" y="52.8" width="1.6" height="1.2" fill="#111"/><rect x="41.0" y="55.2" width="1.6" height="1.2" fill="#111"/><rect x="44.5" y="55.2" width="3.2" height="1.0" fill="#111"/><rect x="52.7" y="55.2" width="3.0" height="1.2" fill="#111"/><rect x="58.6" y="55.2" width="3.1" height="0.7" fill="#111"/><rect x="63.9" y="55.2" width="2.9" height="1.0" fill="#111"/><rect x="70.6" y="55.2" width="3.5" height="1.2" fill="#111"/><rect x="41.0" y="57.6" width="0.6" height="0.7" fill="#111"/><rect x="42.3" y="57.6" width="3.0" height="1.2" fill="#111"/><rect x="45.9" y="57.6" width="2.0" height="1.0" fill="#111"/><rect x="54.3" y="57.6" width="2.5" height="1.2" fill="#111"/><rect x="58.9" y="57.6" width="2.4" height="1.2" fill="#111"/><rect x="65.6" y="57.6" width="2.5" height="0.7" fill="#111"/><rect x="70.6" y="57.6" width="2.2" height="1.0" fill="#111"/><rect x="6" y="105" width="1.5" height="1.2" fill="#333"/><rect x="11" y="105" width="1.5" height="1.2" fill="#333"/></g><g transform="translate(867.1 922.8)"><rect x="0" y="0" width="76.5" height="14" fill="#1b1a3c"/><path d="M52 14 L66 0 L76.5 0 L76.5 14 Z" fill="#8a2a48"/><path d="M60 14 L72 2 L76.5 2 L76.5 10 L70 14 Z" fill="#c0304c"/><rect x="58" y="12" width="18.5" height="2" fill="#d03048"/><rect x="5" y="3.6" width="38" height="2" fill="#e8e8f0" opacity="0.6"/><rect x="5" y="7.9" width="48" height="2" fill="#e8e8f0" opacity="0.6"/><rect x="0" y="14" width="39" height="89" fill="#e0e3e8"/><rect x="5" y="21.0" width="28.0" height="0.7" fill="#b2b6be"/><rect x="5" y="22.4" width="30.4" height="0.7" fill="#b2b6be"/><rect x="5" y="23.9" width="27.5" height="0.7" fill="#b2b6be"/><rect x="5" y="25.3" width="27.7" height="0.7" fill="#b2b6be"/><rect x="5" y="26.8" width="29.8" height="0.7" fill="#b2b6be"/><rect x="5" y="28.2" width="29.4" height="0.7" fill="#b2b6be"/><rect x="5" y="29.7" width="26.9" height="0.7" fill="#b2b6be"/><rect x="5" y="31.1" width="28.9" height="0.7" fill="#b2b6be"/><rect x="5" y="34.8" width="26.8" height="0.7" fill="#b2b6be"/><rect x="5" y="36.2" width="24.5" height="0.7" fill="#b2b6be"/><rect x="5" y="37.7" width="28.8" height="0.7" fill="#b2b6be"/><rect x="5" y="39.2" width="28.2" height="0.7" fill="#b2b6be"/><rect x="5" y="40.6" width="31.0" height="0.7" fill="#b2b6be"/><rect x="5" y="42.1" width="28.6" height="0.7" fill="#b2b6be"/><rect x="5" y="43.5" width="25.1" height="0.7" fill="#b2b6be"/><rect x="5" y="45.0" width="29.4" height="0.7" fill="#b2b6be"/><rect x="5" y="48.6" width="27.8" height="0.7" fill="#b2b6be"/><rect x="5" y="50.1" width="24.6" height="0.7" fill="#b2b6be"/><rect x="5" y="51.5" width="27.3" height="0.7" fill="#b2b6be"/><rect x="5" y="53.0" width="30.3" height="0.7" fill="#b2b6be"/><rect x="5" y="54.4" width="28.4" height="0.7" fill="#b2b6be"/><rect x="5" y="55.9" width="27.0" height="0.7" fill="#b2b6be"/><rect x="5" y="57.3" width="24.1" height="0.7" fill="#b2b6be"/><rect x="5" y="58.8" width="28.7" height="0.7" fill="#b2b6be"/><rect x="5" y="62.4" width="30.9" height="0.7" fill="#b2b6be"/><rect x="5" y="63.9" width="30.0" height="0.7" fill="#b2b6be"/><rect x="5" y="65.3" width="25.5" height="0.7" fill="#b2b6be"/><rect x="5" y="66.8" width="24.8" height="0.7" fill="#b2b6be"/><rect x="5" y="68.2" width="27.3" height="0.7" fill="#b2b6be"/><rect x="5" y="69.7" width="25.9" height="0.7" fill="#b2b6be"/><rect x="5" y="71.1" width="28.0" height="0.7" fill="#b2b6be"/><rect x="5" y="72.6" width="27.2" height="0.7" fill="#b2b6be"/><rect x="5" y="76.2" width="29.2" height="0.7" fill="#b2b6be"/><rect x="5" y="77.7" width="30.5" height="0.7" fill="#b2b6be"/><rect x="5" y="79.1" width="26.6" height="0.7" fill="#b2b6be"/><rect x="5" y="80.6" width="29.2" height="0.7" fill="#b2b6be"/><rect x="43.2" y="21.0" width="2.2" height="1.2" fill="#111"/><rect x="51.7" y="21.0" width="0.5" height="1.2" fill="#111"/><rect x="54.5" y="21.0" width="2.4" height="1.0" fill="#111"/><rect x="61.9" y="21.0" width="0.7" height="1.2" fill="#111"/><rect x="64.9" y="21.0" width="1.9" height="0.7" fill="#111"/><rect x="46.3" y="23.4" width="2.2" height="0.7" fill="#111"/><rect x="61.6" y="23.4" width="3.4" height="1.0" fill="#111"/><rect x="58.7" y="33.3" width="3.2" height="0.7" fill="#111"/><rect x="63.8" y="33.3" width="2.0" height="1.2" fill="#111"/><rect x="72.0" y="33.3" width="1.9" height="1.0" fill="#111"/><rect x="41.0" y="38.2" width="2.1" height="1.0" fill="#111"/><rect x="49.5" y="38.2" width="3.2" height="1.0" fill="#111"/><rect x="54.4" y="38.2" width="1.1" height="0.7" fill="#111"/><rect x="56.5" y="38.2" width="2.6" height="1.2" fill="#111"/><rect x="64.4" y="38.2" width="3.3" height="0.7" fill="#111"/><rect x="69.1" y="38.2" width="1.9" height="1.0" fill="#111"/><rect x="41.0" y="40.6" width="2.1" height="0.7" fill="#111"/><rect x="51.5" y="40.6" width="0.8" height="1.2" fill="#111"/><rect x="54.8" y="40.6" width="3.4" height="0.7" fill="#111"/><rect x="59.6" y="40.6" width="3.5" height="0.7" fill="#111"/><rect x="71.5" y="40.6" width="2.3" height="0.7" fill="#111"/><rect x="41.0" y="45.5" width="1.2" height="1.2" fill="#111"/><rect x="52.6" y="45.5" width="2.2" height="0.7" fill="#111"/><rect x="60.3" y="45.5" width="2.0" height="1.0" fill="#111"/><rect x="41.0" y="47.9" width="1.3" height="1.0" fill="#111"/><rect x="48.3" y="47.9" width="3.2" height="0.7" fill="#111"/><rect x="55.7" y="47.9" width="2.4" height="1.2" fill="#111"/><rect x="58.9" y="47.9" width="1.8" height="1.0" fill="#111"/><rect x="63.3" y="47.9" width="2.4" height="1.0" fill="#111"/><rect x="67.0" y="47.9" width="1.2" height="1.0" fill="#111"/><rect x="69.1" y="47.9" width="1.2" height="1.2" fill="#111"/><rect x="71.9" y="47.9" width="3.2" height="0.7" fill="#111"/><rect x="41.0" y="50.3" width="1.0" height="1.0" fill="#111"/><rect x="43.3" y="50.3" width="1.0" height="1.0" fill="#111"/><rect x="45.9" y="50.3" width="1.9" height="1.2" fill="#111"/><rect x="52.7" y="50.3" width="1.9" height="1.0" fill="#111"/><rect x="57.1" y="50.3" width="3.4" height="1.0" fill="#111"/><rect x="63.5" y="50.3" width="3.3" height="1.0" fill="#111"/><rect x="41" y="76" width="31" height="22" fill="#eceef2"/><rect x="44" y="79.0" width="24" height="0.7" fill="#b2b6be"/><rect x="44" y="80.6" width="24" height="0.7" fill="#b2b6be"/><rect x="44" y="82.2" width="24" height="0.7" fill="#b2b6be"/><rect x="44" y="83.8" width="24" height="0.7" fill="#b2b6be"/><rect x="44" y="85.4" width="24" height="0.7" fill="#b2b6be"/><rect x="44" y="91" width="8" height="1.2" fill="#333"/><rect x="6" y="105" width="1.5" height="1.2" fill="#333"/><rect x="11" y="105" width="1.5" height="1.2" fill="#333"/></g><g transform="translate(1003.9 922.8)"><rect x="0" y="0" width="76.5" height="14" fill="#1b1a3c"/><path d="M52 14 L66 0 L76.5 0 L76.5 14 Z" fill="#8a2a48"/><path d="M60 14 L72 2 L76.5 2 L76.5 10 L70 14 Z" fill="#c0304c"/><rect x="58" y="12" width="18.5" height="2" fill="#d03048"/><rect x="5" y="3.6" width="38" height="2" fill="#e8e8f0" opacity="0.6"/><rect x="5" y="7.9" width="36" height="2" fill="#e8e8f0" opacity="0.6"/><rect x="0" y="14" width="39" height="89" fill="#e0e3e8"/><rect x="5" y="21.0" width="27.1" height="0.7" fill="#b2b6be"/><rect x="5" y="22.4" width="27.6" height="0.7" fill="#b2b6be"/><rect x="5" y="23.9" width="27.6" height="0.7" fill="#b2b6be"/><rect x="5" y="25.3" width="27.1" height="0.7" fill="#b2b6be"/><rect x="5" y="26.8" width="29.5" height="0.7" fill="#b2b6be"/><rect x="5" y="28.2" width="30.6" height="0.7" fill="#b2b6be"/><rect x="5" y="29.7" width="26.0" height="0.7" fill="#b2b6be"/><rect x="5" y="31.1" width="26.5" height="0.7" fill="#b2b6be"/><rect x="5" y="34.8" width="24.3" height="0.7" fill="#b2b6be"/><rect x="5" y="36.2" width="26.9" height="0.7" fill="#b2b6be"/><rect x="5" y="37.7" width="25.9" height="0.7" fill="#b2b6be"/><rect x="5" y="39.2" width="25.3" height="0.7" fill="#b2b6be"/><rect x="5" y="40.6" width="29.9" height="0.7" fill="#b2b6be"/><rect x="5" y="42.1" width="27.7" height="0.7" fill="#b2b6be"/><rect x="5" y="43.5" width="25.6" height="0.7" fill="#b2b6be"/><rect x="5" y="45.0" width="25.2" height="0.7" fill="#b2b6be"/><rect x="5" y="48.6" width="28.2" height="0.7" fill="#b2b6be"/><rect x="5" y="50.1" width="29.8" height="0.7" fill="#b2b6be"/><rect x="5" y="51.5" width="30.2" height="0.7" fill="#b2b6be"/><rect x="5" y="53.0" width="29.1" height="0.7" fill="#b2b6be"/><rect x="5" y="54.4" width="29.3" height="0.7" fill="#b2b6be"/><rect x="5" y="55.9" width="25.2" height="0.7" fill="#b2b6be"/><rect x="5" y="57.3" width="25.0" height="0.7" fill="#b2b6be"/><rect x="5" y="58.8" width="28.7" height="0.7" fill="#b2b6be"/><rect x="5" y="62.4" width="28.4" height="0.7" fill="#b2b6be"/><rect x="5" y="63.9" width="25.3" height="0.7" fill="#b2b6be"/><rect x="5" y="65.3" width="26.2" height="0.7" fill="#b2b6be"/><rect x="5" y="66.8" width="24.1" height="0.7" fill="#b2b6be"/><rect x="5" y="68.2" width="28.8" height="0.7" fill="#b2b6be"/><rect x="5" y="69.7" width="27.6" height="0.7" fill="#b2b6be"/><rect x="5" y="71.1" width="29.9" height="0.7" fill="#b2b6be"/><rect x="5" y="72.6" width="30.4" height="0.7" fill="#b2b6be"/><rect x="5" y="76.2" width="27.6" height="0.7" fill="#b2b6be"/><rect x="5" y="77.7" width="26.4" height="0.7" fill="#b2b6be"/><rect x="5" y="79.1" width="26.0" height="0.7" fill="#b2b6be"/><rect x="5" y="80.6" width="28.5" height="0.7" fill="#b2b6be"/><rect x="41.0" y="21.0" width="0.8" height="1.0" fill="#111"/><rect x="42.6" y="21.0" width="2.5" height="1.2" fill="#111"/><rect x="47.7" y="21.0" width="1.6" height="1.0" fill="#111"/><rect x="51.2" y="21.0" width="3.1" height="1.0" fill="#111"/><rect x="57.2" y="21.0" width="0.7" height="0.7" fill="#111"/><rect x="60.5" y="21.0" width="3.1" height="1.2" fill="#111"/><rect x="41.0" y="25.9" width="0.9" height="0.7" fill="#111"/><rect x="43.0" y="25.9" width="1.0" height="1.0" fill="#111"/><rect x="45.9" y="25.9" width="3.4" height="1.2" fill="#111"/><rect x="55.0" y="25.9" width="1.9" height="1.0" fill="#111"/><rect x="61.4" y="25.9" width="0.9" height="1.2" fill="#111"/><rect x="64.6" y="25.9" width="0.8" height="0.7" fill="#111"/><rect x="67.3" y="25.9" width="1.2" height="1.2" fill="#111"/><rect x="70.4" y="25.9" width="2.7" height="0.7" fill="#111"/><rect x="48.7" y="28.3" width="1.5" height="1.0" fill="#111"/><rect x="58.5" y="28.3" width="1.5" height="1.2" fill="#111"/><rect x="65.5" y="28.3" width="1.2" height="1.2" fill="#111"/><rect x="67.3" y="28.3" width="0.8" height="1.0" fill="#111"/><rect x="69.7" y="28.3" width="2.0" height="0.7" fill="#111"/><rect x="41.0" y="30.7" width="3.5" height="0.7" fill="#111"/><rect x="50.8" y="30.7" width="2.4" height="1.2" fill="#111"/><rect x="58.2" y="30.7" width="0.8" height="0.7" fill="#111"/><rect x="60.6" y="30.7" width="3.4" height="1.0" fill="#111"/><rect x="65.3" y="30.7" width="1.0" height="1.2" fill="#111"/><rect x="45.8" y="33.1" width="2.2" height="1.2" fill="#111"/><rect x="56.2" y="33.1" width="2.6" height="1.2" fill="#111"/><rect x="62.6" y="33.1" width="1.5" height="1.2" fill="#111"/><rect x="65.5" y="33.1" width="2.3" height="1.0" fill="#111"/><rect x="68.7" y="33.1" width="3.4" height="1.0" fill="#111"/><rect x="45.6" y="38.0" width="0.7" height="1.0" fill="#111"/><rect x="47.7" y="38.0" width="2.8" height="1.2" fill="#111"/><rect x="52.8" y="38.0" width="1.0" height="1.0" fill="#111"/><rect x="56.9" y="38.0" width="3.0" height="1.2" fill="#111"/><rect x="62.7" y="38.0" width="3.5" height="1.2" fill="#111"/><rect x="68.5" y="38.0" width="3.2" height="0.7" fill="#111"/><rect x="41.0" y="40.4" width="2.3" height="1.2" fill="#111"/><rect x="44.1" y="40.4" width="3.0" height="1.2" fill="#111"/><rect x="49.2" y="40.4" width="1.6" height="1.0" fill="#111"/><rect x="52.1" y="40.4" width="1.6" height="1.2" fill="#111"/><rect x="55.5" y="40.4" width="1.7" height="1.2" fill="#111"/><rect x="59.8" y="40.4" width="2.0" height="0.7" fill="#111"/><rect x="63.6" y="40.4" width="2.9" height="1.0" fill="#111"/><rect x="41.0" y="45.3" width="3.2" height="0.7" fill="#111"/><rect x="45.4" y="45.3" width="3.2" height="1.2" fill="#111"/><rect x="66.5" y="45.3" width="0.8" height="1.0" fill="#111"/><rect x="69.5" y="45.3" width="3.3" height="0.7" fill="#111"/><rect x="45.8" y="47.7" width="1.5" height="0.7" fill="#111"/><rect x="52.3" y="47.7" width="2.0" height="1.0" fill="#111"/><rect x="62.2" y="47.7" width="1.8" height="1.0" fill="#111"/><rect x="41.0" y="50.1" width="0.5" height="1.2" fill="#111"/><rect x="43.8" y="50.1" width="0.5" height="0.7" fill="#111"/><rect x="46.2" y="50.1" width="2.5" height="1.0" fill="#111"/><rect x="56.1" y="50.1" width="2.0" height="0.7" fill="#111"/><rect x="59.7" y="50.1" width="0.9" height="1.2" fill="#111"/><rect x="61.3" y="50.1" width="0.8" height="1.2" fill="#111"/><rect x="63.8" y="50.1" width="1.9" height="0.7" fill="#111"/><rect x="71.3" y="50.1" width="1.2" height="0.7" fill="#111"/><rect x="41.0" y="55.0" width="2.2" height="1.0" fill="#111"/><rect x="45.3" y="55.0" width="0.6" height="1.0" fill="#111"/><rect x="47.8" y="55.0" width="3.4" height="1.2" fill="#111"/><rect x="52.3" y="55.0" width="1.2" height="1.2" fill="#111"/><rect x="41.0" y="57.4" width="1.2" height="1.0" fill="#111"/><rect x="45.7" y="57.4" width="1.6" height="1.0" fill="#111"/><rect x="57.3" y="57.4" width="1.9" height="1.0" fill="#111"/><rect x="59.8" y="57.4" width="2.5" height="0.7" fill="#111"/><rect x="63.4" y="57.4" width="0.9" height="1.2" fill="#111"/><rect x="66.9" y="57.4" width="0.9" height="0.7" fill="#111"/><rect x="71.7" y="57.4" width="3.4" height="1.0" fill="#111"/><rect x="49.9" y="62.3" width="3.1" height="1.2" fill="#111"/><rect x="63.5" y="62.3" width="2.8" height="0.7" fill="#111"/><rect x="70.7" y="62.3" width="2.0" height="0.7" fill="#111"/><rect x="6" y="105" width="1.5" height="1.2" fill="#333"/><rect x="11" y="105" width="1.5" height="1.2" fill="#333"/></g><g transform="translate(1140.7 922.8)"><rect x="0" y="0" width="76.5" height="14" fill="#1b1a3c"/><path d="M52 14 L66 0 L76.5 0 L76.5 14 Z" fill="#8a2a48"/><path d="M60 14 L72 2 L76.5 2 L76.5 10 L70 14 Z" fill="#c0304c"/><rect x="58" y="12" width="18.5" height="2" fill="#d03048"/><rect x="5" y="3.6" width="28" height="2" fill="#e8e8f0" opacity="0.6"/><rect x="5" y="7.9" width="36" height="2" fill="#e8e8f0" opacity="0.6"/><rect x="0" y="14" width="76.5" height="44.5" fill="#e0e3e8"/><rect x="5" y="21.0" width="27.4" height="0.7" fill="#b2b6be"/><rect x="5" y="22.4" width="30.1" height="0.7" fill="#b2b6be"/><rect x="5" y="23.9" width="28.0" height="0.7" fill="#b2b6be"/><rect x="5" y="25.3" width="27.8" height="0.7" fill="#b2b6be"/><rect x="5" y="26.8" width="30.2" height="0.7" fill="#b2b6be"/><rect x="5" y="28.2" width="28.3" height="0.7" fill="#b2b6be"/><rect x="5" y="29.7" width="29.1" height="0.7" fill="#b2b6be"/><rect x="5" y="33.3" width="29.1" height="0.7" fill="#b2b6be"/><rect x="5" y="34.8" width="30.3" height="0.7" fill="#b2b6be"/><rect x="5" y="36.2" width="30.7" height="0.7" fill="#b2b6be"/><rect x="5" y="37.7" width="26.9" height="0.7" fill="#b2b6be"/><rect x="5" y="39.2" width="27.8" height="0.7" fill="#b2b6be"/><rect x="5" y="40.6" width="30.0" height="0.7" fill="#b2b6be"/><rect x="5" y="42.1" width="29.5" height="0.7" fill="#b2b6be"/><rect x="5" y="45.7" width="30.5" height="0.7" fill="#b2b6be"/><rect x="5" y="47.2" width="26.1" height="0.7" fill="#b2b6be"/><rect x="5" y="48.6" width="29.5" height="0.7" fill="#b2b6be"/><rect x="5" y="50.1" width="28.3" height="0.7" fill="#b2b6be"/><rect x="5" y="51.5" width="31.0" height="0.7" fill="#b2b6be"/><rect x="40" y="21.0" width="28.0" height="0.7" fill="#b2b6be"/><rect x="40" y="22.4" width="30.5" height="0.7" fill="#b2b6be"/><rect x="40" y="23.9" width="26.5" height="0.7" fill="#b2b6be"/><rect x="40" y="25.3" width="27.5" height="0.7" fill="#b2b6be"/><rect x="40" y="26.8" width="27.4" height="0.7" fill="#b2b6be"/><rect x="40" y="28.2" width="29.0" height="0.7" fill="#b2b6be"/><rect x="40" y="29.7" width="27.1" height="0.7" fill="#b2b6be"/><rect x="40" y="33.3" width="29.4" height="0.7" fill="#b2b6be"/><rect x="40" y="34.8" width="28.0" height="0.7" fill="#b2b6be"/><rect x="40" y="36.2" width="29.0" height="0.7" fill="#b2b6be"/><rect x="40" y="37.7" width="28.2" height="0.7" fill="#b2b6be"/><rect x="40" y="39.2" width="29.8" height="0.7" fill="#b2b6be"/><rect x="40" y="40.6" width="26.8" height="0.7" fill="#b2b6be"/><rect x="40" y="42.1" width="29.7" height="0.7" fill="#b2b6be"/><rect x="40" y="45.7" width="28.8" height="0.7" fill="#b2b6be"/><rect x="3" y="80" width="73.5" height="19.5" fill="#1b1a3c"/><g fill="#7ad8c8"><circle cx="9" cy="86" r="2"/><circle cx="15" cy="92" r="1.5"/><circle cx="22" cy="85" r="2"/><circle cx="28" cy="92" r="1.6"/></g><g fill="#e8e8f0"><ellipse cx="12" cy="84" rx="2.2" ry="1.3"/><ellipse cx="19" cy="92" rx="2.2" ry="1.3"/><ellipse cx="25" cy="88" rx="2.2" ry="1.3"/><ellipse cx="31" cy="85" rx="2" ry="1.2"/></g><path d="M26 84 L33 90" stroke="#e0c040" stroke-width="1"/><rect x="52" y="92" width="24" height="3" fill="#d03048"/><rect x="52" y="84" width="20" height="1" fill="#ccc"/><rect x="52" y="87" width="18" height="1" fill="#999"/><rect x="6" y="105" width="1.5" height="1.2" fill="#333"/><rect x="11" y="105" width="1.5" height="1.2" fill="#333"/></g></svg>
<!--THUMBS-END-->
<!-- RIGHT PANEL -->
<div class="a" style="left:1192px;top:60px;width:320px;height:993px;background:#fff"></div>
<div class="a pat" style="left:1201px;top:69px;width:301px;height:33px;border-radius:17px"></div>
<div class="a" style="left:1205.5px;top:73.5px;width:48.5px;height:24px;background:#fff;border-radius:12px"></div>
<div class="t" style="left:1215px;top:82px;font-size:10px;color:#222">Details</div>
<div class="t" style="left:1274px;top:81px;font-size:9.9px;color:#333">Forwards</div>
<div class="t" style="left:1364px;top:81px;font-size:9.9px;color:#333">Checklists</div>
<div class="t" style="left:1457px;top:81px;font-size:9.9px;color:#333">Project</div>



<!-- RIGHT PANEL CONTENT -->
<div class="a" style="left:1320.5px;top:78.2px;width:14.2px;height:14.2px;border-radius:50%;background:#c9c9c9"></div>
<div class="t" style="left:1324.9px;top:81.4px;font-size:9px;color:#fff">0</div>
<div class="a" style="left:1414px;top:78.2px;width:14.4px;height:14.4px;border-radius:50%;background:#3f7ddb"></div>
<div class="t" style="left:1418.6px;top:81.4px;font-size:9px;color:#fff">1</div>

<div class="t" style="left:1205.5px;top:125px;font-size:15.45px;color:#111">Managing Brand Compliance</div>
<div class="t" style="left:1205.5px;top:148.8px;font-size:11.7px;color:#8a8a8a">Brochures</div>
<div class="a" style="left:1446px;top:125.7px;width:23px;height:22px;border-radius:3px;background:#4180dc"></div>
<div class="t" style="left:1450.3px;top:132px;font-size:10px;font-weight:700;color:#fff">V1</div>
<div class="a" style="left:1474.7px;top:125.7px;width:22px;height:22px;border-radius:3.5px;background:#e07a35"></div>

<div class="a" style="left:1192px;top:176px;width:320px;height:1px;background:#ececec"></div>
<div class="t" style="left:1206px;top:193.6px;font-size:10px;color:#8a8a8a">SUBMISSION DETAILS</div>

<div class="t" style="left:1236px;top:228.5px;font-size:10px;color:#1e1e1e">Submitted by Jodie Byass (Simple)</div>
<div class="t" style="left:1236px;top:240.5px;font-size:10px;color:#8f8f8f">04 Sep 2024 3:19 PM</div>
<div class="t" style="left:1236px;top:264.6px;font-size:10px;color:#3a78c9">Complete Checklists (1)</div>
<div class="a" style="left:1208px;top:291px;width:290px;height:1px;background:#ececec"></div>
<div class="t" style="left:1229.6px;top:304.8px;font-size:10px;color:#8a8a8a">Submitter Message</div>
<div class="a" style="left:1211px;top:329.8px;width:285px;font-size:10px;line-height:13px;color:#1e1e1e;-webkit-text-stroke:0.2px currentColor">Please review the guides and assets I would like to include in<br>our Compliance campaign</div>
<div class="t" style="left:1205.5px;top:377px;font-size:10px;color:#8a8a8a">APPROVAL PATH</div>

<div class="a" style="left:1204.3px;top:405.2px;width:294px;height:133px;border-radius:7px;border:1px solid #f0f0f0;overflow:hidden;background:#fff">
  <div class="a" style="left:0;top:0;width:100%;height:26px;background:#f4f4f4"></div>
  <div class="a" style="left:0;top:52.8px;width:100%;height:1px;background:#f0f0f0"></div>
  <div class="a" style="left:0;top:78.8px;width:100%;height:27px;background:#f4f4f4"></div>
</div>
<div class="t" style="left:1214px;top:414.4px;font-size:10px;color:#1e1e1e">Approval Level 1</div>
<div class="t" style="left:1232px;top:441px;font-size:10px;color:#1e1e1e">Katie Suwankerd</div>
<div class="t" style="left:1232px;top:467.2px;font-size:10px;color:#1e1e1e">Jodie Byass</div>
<div class="a" style="left:1292.8px;top:463.1px;width:24px;height:16.3px;border-radius:3px;background:#4a86d8"></div>
<div class="t" style="left:1295.5px;top:466.2px;font-size:10.6px;color:#fff">You</div>
<div class="t" style="left:1214px;top:493.8px;font-size:10px;color:#1e1e1e">Approval Level 2</div>
<div class="t" style="left:1232px;top:520.4px;font-size:10px;color:#1e1e1e">Aaron Croft</div>

<div class="a" style="left:1415.3px;top:436.2px;width:27.3px;height:17.5px;border-radius:4.5px;border:1px solid #d6d6d6"></div>
<div class="t" style="left:1433.8px;top:440.5px;font-size:10px;color:#bdbdbd">0</div>
<div class="a" style="left:1415.3px;top:462.5px;width:27.3px;height:17.5px;border-radius:4.5px;border:1px solid #d6d6d6"></div>
<div class="t" style="left:1433.8px;top:466.8px;font-size:10px;color:#bdbdbd">0</div>
<div class="a" style="left:1454.2px;top:464px;width:15px;height:14.8px;border-radius:3px;background:#2f6dbd"></div>
<div class="a" style="left:1478px;top:410.8px;width:15px;height:15px;border-radius:3px;background:#e07a35"></div>
<div class="a" style="left:1478px;top:437.3px;width:15px;height:15px;border-radius:3px;background:#e07a35"></div>
<div class="a" style="left:1478px;top:464px;width:15px;height:15px;border-radius:3px;background:#e07a35"></div>

<div class="a" style="left:1201.2px;top:560px;width:229.6px;height:27px;border-radius:5px;background:#f4f4f4"></div>
<div class="t" style="left:1247.3px;top:569.4px;font-size:10px;color:#1e1e1e">Showing 0 of 0 total responses</div>

<!-- ICON OVERLAY: header -->
<svg width="1530" height="1071" style="left:0;top:0" fill="none" stroke-linecap="round" stroke-linejoin="round">
 <g stroke="#e3e3e3" stroke-width="1.2">
  <path d="M98.5 29.5h3l1.8 1.8v6.6h-4.8z"/><path d="M108.6 29.5h3l1.8 1.8v6.6h-4.8z"/>
  <path d="M105.9 26v15.7" stroke="#f0f0f0" stroke-width="1"/>
 </g>
 <g stroke="#4a86d6" stroke-width="1.7"><path d="M195.2 33.9h10"/><path d="M201.4 30.2l3.9 3.7-3.9 3.6"/></g>
 <path d="M265 32.3h7l-3.5 3.8z" fill="#333" stroke="none"/>
 <g stroke="#2a2a2a" stroke-width="1.4">
  <rect x="307.2" y="33.2" width="3.8" height="7.2" rx="0.6"/>
  <path d="M311 34.6c2.2-.6 4-.5 5.2.6l-4 1.2M311 39.8l4.6 1 4.6-2.4c.6-.6.2-1.6-.7-1.4l-3.7 1"/>
  <path d="M313.4 30.4l1.7 1.8 3.5-3.7" stroke-width="1.5"/>
 </g>
 <g stroke="#111" stroke-width="1.6">
  <path d="M403.6 27h9.1l2.5 14.2h-10.5z"/><path d="M403.6 27l-3.1 12.8h4.2"/><path d="M406.6 34h4" stroke-width="1.8"/>
 </g>
 <path d="M473 32.3h6.6l-3.3 3.6z" fill="#333" stroke="none"/>
 <g stroke="#444" stroke-width="1.4">
  <path d="M516.3 28.4h10.9c.4 0 .7.3.7.7v6.2c0 .4-.3.7-.7.7h-2l-2.4 2.7-.5-2.7h-6c-.4 0-.7-.3-.7-.7v-6.2c0-.4.3-.7.7-.7z"/>
  <path d="M518.6 30.9h3.8M524.3 30.9h.2"/>
 </g>
 <path d="M1400.6 32.6l3.3 3.1 3.3-3.1" stroke="#fff" stroke-width="1.7"/>
 <path d="M1453 28.6l-6.2 5.5 6.2 5.5" stroke="#c9c9c9" stroke-width="1.3"/>
 <path d="M1472.6 28.6l6.2 5.5-6.2 5.5" stroke="#555" stroke-width="1.5"/>
</svg>

<!-- ICON OVERLAY: toolbar -->
<svg width="1530" height="1071" style="left:0;top:0" fill="none" stroke-linecap="round" stroke-linejoin="round">
 <g stroke="#2b2b2b" stroke-width="1.6">
  <path d="M42.2 75.5V69.6c0-.5.3-.8.8-.8h5.9c.6 0 .9.4.9.9v5.8c0 3.3-2 5.3-4.6 5.3s-4.7-2-4.7-5.1v-2.3c0-.6.4-.9.9-.9h.8"/>
  <path d="M44 69v5.6M45.7 69v5.6M47.4 69v5.6" stroke-width="0.8"/>
  <path d="M76.4 71.7c3.2 1.2 4 5.6 1.2 7.4-2.8 1.6-4.8-.9-5.2-3.6-.4-2.7-.3-7.3-3-7.3s-3.5 3.4-1.9 5.8c1 1.5 2.5 2.7 2 4.6"/>
  <path d="M68.3 78.4 Q68.7 80.0 70.3 80.4 Q68.7 80.8 68.3 82.4 Q67.9 80.8 66.3 80.4 Q67.9 80.0 68.3 78.4 Z" fill="#111" stroke="none"/>
  <path d="M95.6 76.8c2.2-.6 3.2.4 4.3 2.6 1 2 2.6 2.4 3.9.5l.8-1.4"/>
  <path d="M104.7 78.6l-1.1-3.6 1.7-5.4c.2-.6.6-.8 1.1-.8h1.3c.6 0 .9.4.8 1l-1 5.6-2.8 3.2z" stroke-width="1.2"/>
  <path d="M103.7 75.2l3.5.6" stroke-width="1.0"/>
  <path d="M123.5 80.4h9.4l.8-1.3"/>
  <path d="M133.4 79.3l-1.1-3.6 1.7-5.4c.2-.6.6-.8 1.1-.8h1.3c.6 0 .9.4.8 1l-1 5.6-2.8 3.2z" stroke-width="1.2"/>
  <path d="M132.4 75.9l3.5.6" stroke-width="1.0"/>
 </g>
 <g stroke="#111" stroke-width="1.8">
  <path d="M164.2 69l-8.6 8.8"/><path d="M153.2 78.3 Q153.6 79.9 155.2 80.3 Q153.6 80.7 153.2 82.3 Q152.8 80.7 151.2 80.3 Q152.8 79.9 153.2 78.3 Z" fill="#111" stroke="none"/>
  <path d="M180.8 76.8A6.2 6.2 0 1 1 183.9 80.8"/><path d="M181.3 78.3 Q181.7 79.9 183.3 80.3 Q181.7 80.7 181.3 82.3 Q180.9 80.7 179.3 80.3 Q180.9 79.9 181.3 78.3 Z" fill="#111" stroke="none"/>
  <path d="M209.3 76.2V69.8h11.3v11h-7.2"/><path d="M209.5 78.4 Q209.9 80.0 211.5 80.4 Q209.9 80.8 209.5 82.4 Q209.1 80.8 207.5 80.4 Q209.1 80.0 209.5 78.4 Z" fill="#111" stroke="none"/>
 </g>
 <g stroke="#2b2b2b" stroke-width="1.6">
  <path d="M238.1 70.6h10.4v7.6l-3.6 3.6h-6.8z"/><path d="M248.5 78.2h-3.6v3.6"/>
  <path d="M243.1 68.6v1.8" stroke-width="1.8"/>
  <path d="M240.6 73.7h5M240.6 76.4h5" stroke-width="1.2"/>
 </g>
 <rect x="265.7" y="68.9" width="11.9" height="12.3" rx="1.3" stroke="#555" stroke-width="1.2"/>
 <rect x="266.7" y="70" width="4.6" height="4.8" fill="#e8732c"/><rect x="271.9" y="70" width="4.6" height="4.8" fill="#cfb44a"/>
 <rect x="266.7" y="75.4" width="4.6" height="4.8" fill="#f2a262"/><rect x="271.9" y="75.4" width="4.6" height="4.8" fill="#7d9abb"/>
 <path d="M278.3 78.6v3.2h-3.2z" fill="#111"/>
 <g stroke="#222" stroke-width="1.4">
  <path d="M296 69.6v10.9M294.2 69.6h3.6M294.2 80.6h3.6"/>
  <path d="M299.5 69.6h1.5M302.5 69.6h1M305 69.6v1.4M305 72.6v1.4M305 75.6v1.4M305 78.6v1.4M299.5 80.6h1.5M302.5 80.6h1" stroke-width="1.3"/>
 </g>
 <g stroke="#1c1c1c" stroke-width="1.45">
  <path d="M336.3 71.1a5.5 5.5 0 0 1 4.2 9"/>
  <path d="M339.5 81.4a5.5 5.5 0 0 1 -7.6-7.8" stroke-dasharray="1.8 1.6"/>
  <path d="M336.5 69l-2.2 2.1 2.2 2.2"/>
  <path d="M358.3 71.1a5.5 5.5 0 0 0 -3.1 9.9"/>
  <path d="M357 82.1a5.5 5.5 0 0 0 5.9-9.2" stroke-dasharray="1.8 1.6"/>
  <path d="M358.1 69l2.2 2.1-2.2 2.2"/>
 </g>
 <rect x="378.6" y="70.4" width="12.2" height="9.2" rx="1.2" stroke="#8c9297" stroke-width="1.2"/>
 <rect x="381.1" y="72.8" width="3.4" height="4.2" fill="#8c9297"/><rect x="385.5" y="72.8" width="3.4" height="4.2" fill="#8c9297"/>
 <g stroke="#8c9297" stroke-width="1.2"><path d="M411 69.1l5 3.8-5 3.8-5-3.8z"/><path d="M406 76.1l5 4 5-4"/></g>
 <g stroke="#111" stroke-width="1.4"><path d="M437.5 69.6v7.8M434.6 74.6l2.9 2.9 2.9-2.9"/><path d="M432.3 77.6v2.8h10.4v-2.8"/></g>
 <path d="M496.3 73h5.8l-2.9 3.1z" fill="#333"/>
 <path d="M561.2 73h5.8l-2.9 3.1z" fill="#333"/>
 <path d="M644.2 73h5.8l-2.9 3.1z" fill="#333"/>
 <g stroke="#222" stroke-width="1.4"><path d="M595.8 70.8l-4.8 4.5 4.8 4.5"/><path d="M660.3 70.8l4.8 4.5-4.8 4.5"/></g>
 <rect x="1170.5" y="69.3" width="11" height="11.3" rx="1.6" stroke="#1c1c1c" stroke-width="1.3"/>
 <path d="M1177.7 69.5v11" stroke="#1c1c1c" stroke-width="1.3"/>
</svg>

<!-- ICON OVERLAY: right panel -->
<svg width="1530" height="1071" style="left:0;top:0" fill="none" stroke-linecap="round" stroke-linejoin="round">
 <defs><clipPath id="avc"><circle cx="1215.8" cy="238.3" r="11.3"/></clipPath></defs>
 <g clip-path="url(#avc)">
  <rect x="1204" y="226" width="24" height="24" fill="#5d6b7c"/>
  <path d="M1204 226h24v5c-3-1-6 0-9-1s-8 1-15 0z" fill="#8e9a72"/>
  <path d="M1206 250c0-5 1.5-9 4.5-10.5l5.3 1 5.3-1c3 1.5 4.5 5.5 4.5 10.5z" fill="#d8a284"/>
  <path d="M1210.5 250c0-4.5.8-7.5 2.5-8.5h5.6c1.7 1 2.5 4 2.5 8.5z" fill="#24213f"/>
  <path d="M1212.5 246h1M1216 247.5h1M1218.5 245.5h.8" stroke="#c8c8d8" stroke-width="0.7"/>
  <path d="M1209.8 243.5c-.8-7-.3-14.5 6-15 6.3.5 6.8 8 6 15l-2.2-.8c.2-4-.2-8.2-3.8-8.6-3.6.4-4 4.6-3.8 8.6z" fill="#35271f"/>
  <ellipse cx="1215.8" cy="235.8" rx="2.5" ry="3.3" fill="#e0ae90"/>
 </g>
 <g stroke="#222" stroke-width="1.5">
  <path d="M1210.4 265.2l1.5 1.5 3.4-3.1M1210.4 270.8l1.5 1.5 3.4-3.1"/>
  <path d="M1218 265.5h4.6M1218 271.2h4.6" stroke-width="1.7"/>
 </g>
 <g stroke="#444" stroke-width="1.4"><rect x="1209.6" y="304.4" width="12.4" height="8.6" rx="0.8"/><path d="M1210 305l5.8 4.2 5.8-4.2"/></g>
 <path d="M1482.5 200l4.7-5 4.7 5" stroke="#222" stroke-width="1.6"/>
 <path d="M1482.5 384l4.7-5 4.7 5" stroke="#222" stroke-width="1.6"/>
 <g stroke="#fff3e6" stroke-width="1.4" opacity="0.95"><circle cx="1485.7" cy="136.7" r="7.2"/><path d="M1485 132.7v4.1l2.2 2.2" /></g>
 <g stroke="#f6e3d2" stroke-width="1.1">
  <circle cx="1485.5" cy="418.3" r="5.3"/><path d="M1485 415.3v3l1.6 1.6"/>
  <circle cx="1485.5" cy="444.8" r="5.3"/><path d="M1485 441.8v3l1.6 1.6"/>
  <circle cx="1485.5" cy="471.5" r="5.3"/><path d="M1485 468.5v3l1.6 1.6"/>
 </g>
 <g stroke="#333" stroke-width="1.2"><circle cx="1300.7" cy="416.1" r="2.9"/><path d="M1300.7 419v1.5M1295.8 422.6c.6-2 2.4-2.8 4.9-2.8s4.3.8 4.9 2.8z"/></g>
 <g stroke="#333" stroke-width="1.2"><circle cx="1300.7" cy="495.1" r="2.9"/><path d="M1300.7 498v1.5M1295.8 501.6c.6-2 2.4-2.8 4.9-2.8s4.3.8 4.9 2.8z"/></g>
 <g stroke="#a8a8a8" stroke-width="1">
  <path d="M1421.3 441.5h8v6l-2.6 2.6h-5.4z"/><path d="M1429.3 447.5h-2.6v2.6"/><path d="M1425.2 440v1.2" stroke-width="1.4"/>
  <rect x="1422.8" y="443" width="4.6" height="3.6" fill="#cfcfcf" stroke="none"/>
  <path d="M1421.3 467.8h8v6l-2.6 2.6h-5.4z"/><path d="M1429.3 473.8h-2.6v2.6"/><path d="M1425.2 466.3v1.2" stroke-width="1.4"/>
  <path d="M1423 470.2h4.4M1423 472.2h4.4"/>
 </g>
 <g stroke="#fff" stroke-width="1.1"><path d="M1456.8 471.3c1.6-2.6 3.4-3.6 4.9-3.6s3.3 1 4.9 3.6c-1.6 2.6-3.4 3.6-4.9 3.6s-3.3-1-4.9-3.6z"/><circle cx="1461.7" cy="471.3" r="1.6"/></g>
 <g stroke="#222" stroke-width="1.5"><path d="M1450.4 569.6h11.6M1452.4 573.4h7.6M1454.6 577.2h3.2"/></g>
 <g fill="#111"><circle cx="1480.8" cy="573.3" r="2"/><circle cx="1487.4" cy="573.3" r="2"/><circle cx="1494" cy="573.3" r="2"/></g>
</svg>
<div id="winb"></div>
</body></html>
